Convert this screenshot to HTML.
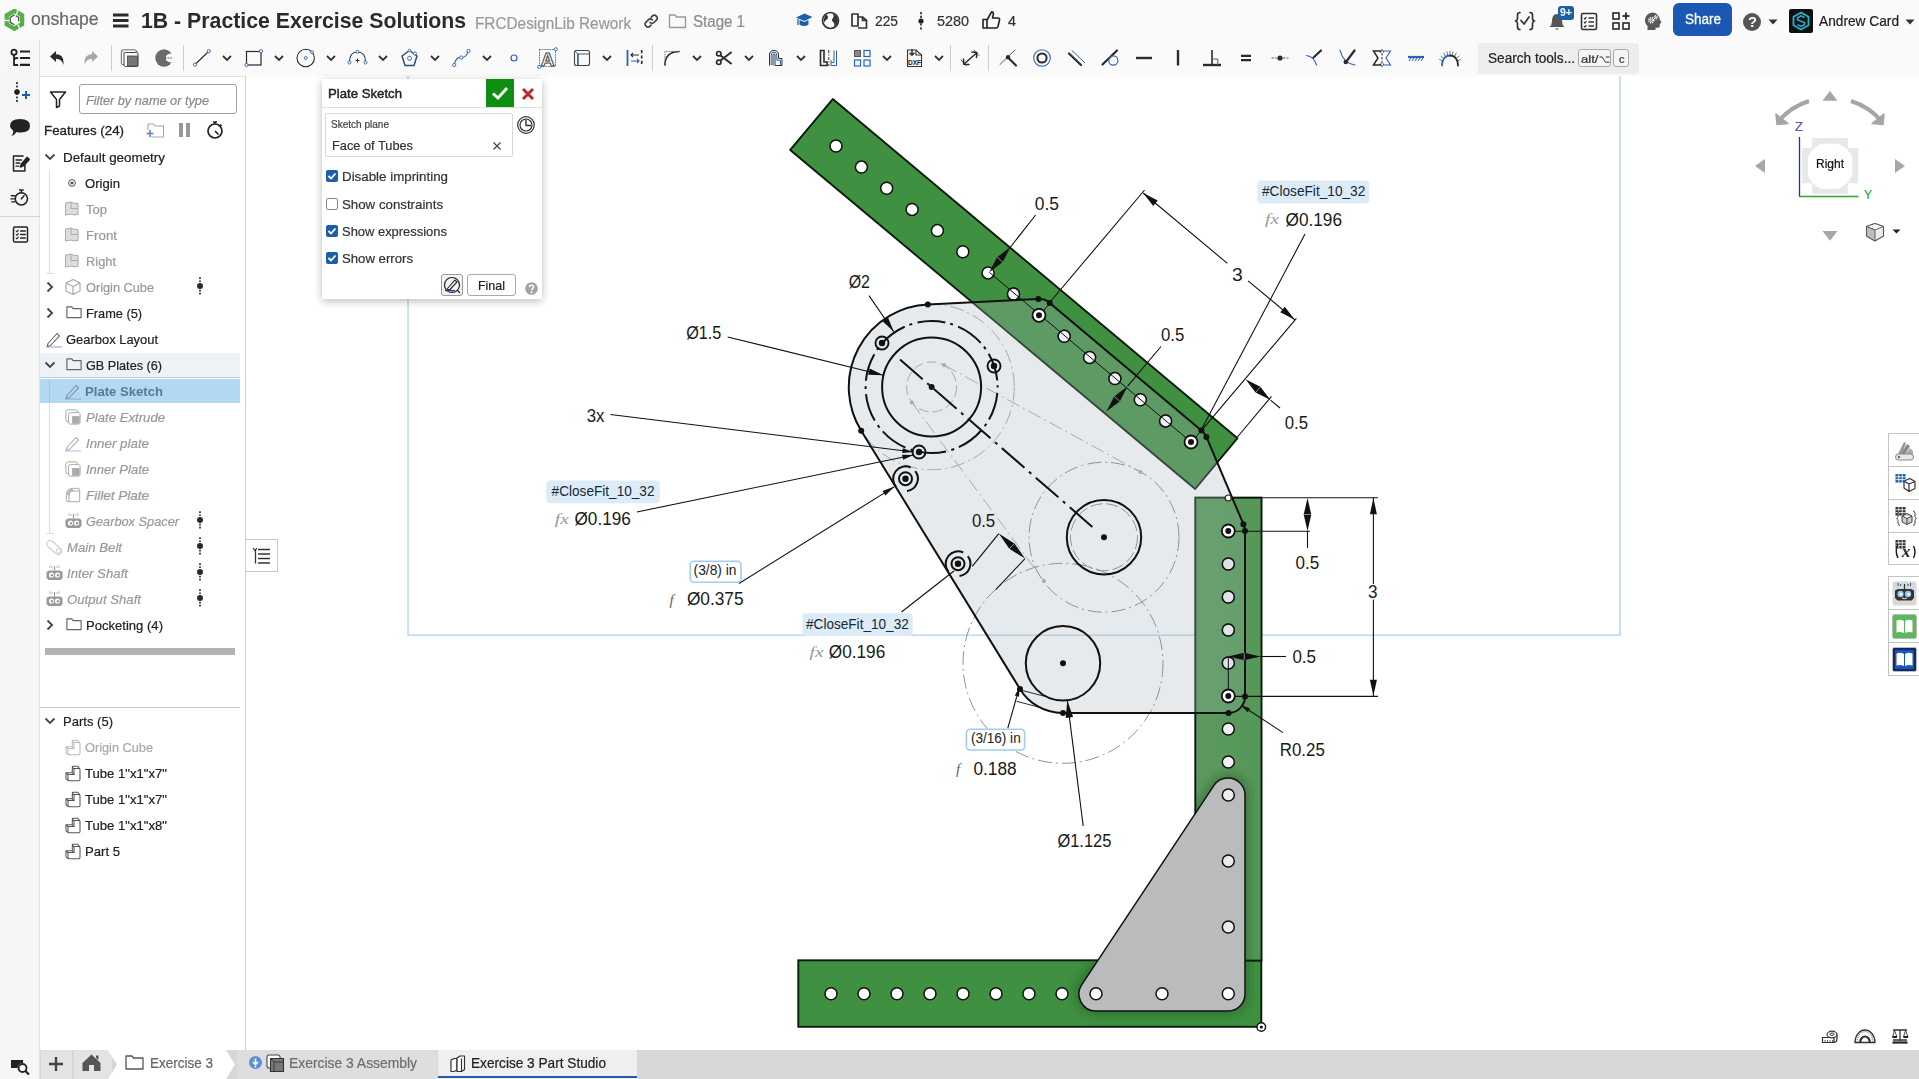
<!DOCTYPE html>
<html><head><meta charset="utf-8"><title>Onshape</title>
<style>
html,body{margin:0;padding:0}
body{width:1919px;height:1079px;overflow:hidden;background:#fff;font-family:"Liberation Sans",sans-serif;position:relative}
.a{position:absolute;display:block}
.t{position:absolute;white-space:nowrap;transform-origin:0 50%}
</style></head>
<body>
<svg class="a" style="left:0;top:0" width="1919" height="1079" viewBox="0 0 1919 1079" font-family="Liberation Sans, sans-serif">
<defs>
<filter id="sh" x="-20%" y="-20%" width="140%" height="140%"><feGaussianBlur stdDeviation="4"/></filter>
<linearGradient id="vg" x1="0" y1="0" x2="1" y2="0"><stop offset="0" stop-color="#5c995f"/><stop offset="1" stop-color="#559857"/></linearGradient>
</defs>
<path d="M408 60 H1620 V635 H408 Z" fill="none" stroke="#a9d1ef" stroke-width="1.25"/>
<path d="M832.8 99.1 L790.2 149.9 L1195.2 489 L1237.5 438.2 Z" fill="#3f9041" stroke="#0a1a0a" stroke-width="1.9" stroke-linejoin="round"/>
<rect x="798.3" y="960.3" width="463" height="66.5" fill="#3f9041" stroke="#0a1a0a" stroke-width="1.9"/>
<rect x="1195.3" y="497.6" width="66.2" height="463" fill="url(#vg)" stroke="#0a1a0a" stroke-width="1.9"/>
<circle cx="836.0" cy="146.0" r="6" fill="#fff" stroke="#111" stroke-width="1.5"/>
<circle cx="861.4" cy="167.1" r="6" fill="#fff" stroke="#111" stroke-width="1.5"/>
<circle cx="886.7" cy="188.3" r="6" fill="#fff" stroke="#111" stroke-width="1.5"/>
<circle cx="912.1" cy="209.4" r="6" fill="#fff" stroke="#111" stroke-width="1.5"/>
<circle cx="937.4" cy="230.6" r="6" fill="#fff" stroke="#111" stroke-width="1.5"/>
<circle cx="962.8" cy="251.7" r="6" fill="#fff" stroke="#111" stroke-width="1.5"/>
<circle cx="988.1" cy="272.9" r="6" fill="#fff" stroke="#111" stroke-width="1.5"/>
<circle cx="1013.5" cy="294.0" r="6" fill="#fff" stroke="#111" stroke-width="1.5"/>
<circle cx="1038.9" cy="315.1" r="6" fill="#fff" stroke="#111" stroke-width="1.5"/>
<circle cx="1064.2" cy="336.3" r="6" fill="#fff" stroke="#111" stroke-width="1.5"/>
<circle cx="1089.6" cy="357.4" r="6" fill="#fff" stroke="#111" stroke-width="1.5"/>
<circle cx="1114.9" cy="378.6" r="6" fill="#fff" stroke="#111" stroke-width="1.5"/>
<circle cx="1140.3" cy="399.7" r="6" fill="#fff" stroke="#111" stroke-width="1.5"/>
<circle cx="1165.6" cy="420.9" r="6" fill="#fff" stroke="#111" stroke-width="1.5"/>
<circle cx="1191.0" cy="442.0" r="6" fill="#fff" stroke="#111" stroke-width="1.5"/>
<circle cx="831.0" cy="993.7" r="6" fill="#fff" stroke="#111" stroke-width="1.5"/>
<circle cx="864.0" cy="993.7" r="6" fill="#fff" stroke="#111" stroke-width="1.5"/>
<circle cx="897.0" cy="993.7" r="6" fill="#fff" stroke="#111" stroke-width="1.5"/>
<circle cx="930.0" cy="993.7" r="6" fill="#fff" stroke="#111" stroke-width="1.5"/>
<circle cx="963.0" cy="993.7" r="6" fill="#fff" stroke="#111" stroke-width="1.5"/>
<circle cx="996.0" cy="993.7" r="6" fill="#fff" stroke="#111" stroke-width="1.5"/>
<circle cx="1029.0" cy="993.7" r="6" fill="#fff" stroke="#111" stroke-width="1.5"/>
<circle cx="1062.0" cy="993.7" r="6" fill="#fff" stroke="#111" stroke-width="1.5"/>
<circle cx="1228.3" cy="531.0" r="6" fill="#f0f2f2" stroke="#111" stroke-width="1.5"/>
<circle cx="1228.3" cy="564.0" r="6" fill="#f0f2f2" stroke="#111" stroke-width="1.5"/>
<circle cx="1228.3" cy="597.0" r="6" fill="#f0f2f2" stroke="#111" stroke-width="1.5"/>
<circle cx="1228.3" cy="630.0" r="6" fill="#f0f2f2" stroke="#111" stroke-width="1.5"/>
<circle cx="1228.3" cy="663.0" r="6" fill="#f0f2f2" stroke="#111" stroke-width="1.5"/>
<circle cx="1228.3" cy="696.0" r="6" fill="#f0f2f2" stroke="#111" stroke-width="1.5"/>
<circle cx="1228.3" cy="729.0" r="6" fill="#f0f2f2" stroke="#111" stroke-width="1.5"/>
<circle cx="1228.3" cy="762.0" r="6" fill="#f0f2f2" stroke="#111" stroke-width="1.5"/>
<clipPath id="tubeclip"><rect x="1196" y="498.5" width="64.7" height="461.8"/><rect x="799" y="961" width="461.7" height="65"/></clipPath>
<g clip-path="url(#tubeclip)"><path d="M1228 778 A17 17 0 0 1 1245 795 V994 A17 17 0 0 1 1228 1011 H1096 A17 17 0 0 1 1081.8 984.6 L1213.8 785.6 A17 17 0 0 1 1228 778 Z" fill="none" stroke="#1f4f22" stroke-opacity="0.45" stroke-width="9" filter="url(#sh)"/></g>
<path d="M1228 778 A17 17 0 0 1 1245 795 V994 A17 17 0 0 1 1228 1011 H1096 A17 17 0 0 1 1081.8 984.6 L1213.8 785.6 A17 17 0 0 1 1228 778 Z" fill="#babbbd" stroke="#111" stroke-width="1.5"/>
<circle cx="1228.3" cy="795.0" r="6" fill="#eceef0" stroke="#111" stroke-width="1.5"/>
<circle cx="1228.3" cy="861.0" r="6" fill="#e8eaec" stroke="#111" stroke-width="1.5"/>
<circle cx="1228.3" cy="927.0" r="6" fill="#e8eaec" stroke="#111" stroke-width="1.5"/>
<circle cx="1228.3" cy="993.7" r="6" fill="#fff" stroke="#111" stroke-width="1.5"/>
<circle cx="1162.0" cy="993.7" r="6" fill="#fff" stroke="#111" stroke-width="1.5"/>
<circle cx="1096.0" cy="993.7" r="6" fill="#fff" stroke="#111" stroke-width="1.5"/>
<path d="M927.8 304.5 L1038.4 299 Q1046 298.8 1049.7 303 L1201.4 430.4 Q1205 433.4 1206.4 436.9 L1243.4 524.2 Q1245 528 1245 531 V696.5 A16.5 16.5 0 0 1 1228.5 713 H1063 A49.5 49.5 0 0 1 1020 689 L861.2 430.7 A82.7 82.7 0 0 1 927.8 304.5 Z" fill="#a9b4be" fill-opacity="0.285"/>
<path d="M1196.2 498.6 H1232 L1243.4 524.2 L1245 531 V696.5 A16.5 16.5 0 0 1 1228.5 713 H1196.2 Z" fill="#3f9646" fill-opacity="0.16"/>
<circle cx="1228.3" cy="564.0" r="6" fill="#dfe3e5" stroke="#111" stroke-width="1.5"/>
<circle cx="1228.3" cy="597.0" r="6" fill="#dfe3e5" stroke="#111" stroke-width="1.5"/>
<circle cx="1228.3" cy="630.0" r="6" fill="#dfe3e5" stroke="#111" stroke-width="1.5"/>
<circle cx="1228.3" cy="663.0" r="6" fill="#dfe3e5" stroke="#111" stroke-width="1.5"/>
<circle cx="1013.5" cy="294.0" r="6" fill="#f0f2f4" stroke="#111" stroke-width="1.5"/>
<circle cx="1038.9" cy="315.1" r="6" fill="#f0f2f4" stroke="#111" stroke-width="1.5"/>
<circle cx="1064.2" cy="336.3" r="6" fill="#f0f2f4" stroke="#111" stroke-width="1.5"/>
<circle cx="1089.6" cy="357.4" r="6" fill="#f0f2f4" stroke="#111" stroke-width="1.5"/>
<circle cx="1114.9" cy="378.6" r="6" fill="#f0f2f4" stroke="#111" stroke-width="1.5"/>
<circle cx="1140.3" cy="399.7" r="6" fill="#f0f2f4" stroke="#111" stroke-width="1.5"/>
<circle cx="1165.6" cy="420.9" r="6" fill="#f0f2f4" stroke="#111" stroke-width="1.5"/>
<g fill="none" stroke="#929292" stroke-width="1">
<circle cx="931.6" cy="387" r="82.7" stroke-dasharray="14 4 2 4" stroke="#a9a9a9"/>
<circle cx="931.6" cy="387" r="25" stroke-dasharray="10 4" stroke="#a9a9a9"/>
<circle cx="1104" cy="537.2" r="75" stroke-dasharray="14 4 2 4"/>
<circle cx="1104" cy="537.2" r="33.5" stroke-dasharray="12 4"/>
<circle cx="1063" cy="663.3" r="100" stroke-dasharray="14 4 2 4"/>
<path d="M944 365 L1140.5 472" stroke-dasharray="14 4 2 4" stroke="#a9a9a9"/>
<path d="M911.8 402.4 L1044 581" stroke-dasharray="14 4 2 4" stroke="#a9a9a9"/>
<path d="M958 564 L1001 535" stroke="none"/>
</g>
<circle cx="944" cy="365" r="2" fill="#aaa"/>
<circle cx="911.8" cy="402.4" r="2" fill="#aaa"/>
<circle cx="1140.5" cy="472" r="2" fill="#aaa"/>
<circle cx="1044" cy="581" r="2" fill="#aaa"/>
<path d="M927.8 304.5 L1038.4 299 Q1046 298.8 1049.7 303 L1201.4 430.4 Q1205 433.4 1206.4 436.9 L1243.4 524.2 Q1245 528 1245 531 V696.5 A16.5 16.5 0 0 1 1228.5 713 H1063 A49.5 49.5 0 0 1 1020 689 L861.2 430.7 A82.7 82.7 0 0 1 927.8 304.5 Z" fill="none" stroke="#111" stroke-width="2"/>
<path d="M989.3 272.3 L1191.0 442.0" stroke="#111" stroke-width="1" fill="none" />
<g fill="none" stroke="#111" stroke-width="2">
<circle cx="931.6" cy="387" r="49.5"/>
<circle cx="931.6" cy="387" r="66" stroke-dasharray="28 5 3 5.47" stroke-dashoffset="-6"/>
<circle cx="1104" cy="537.2" r="37.2"/>
<circle cx="1063" cy="663.3" r="37.2"/>
<path d="M900 359.5 L1096.5 530.5" stroke-dasharray="30 6 3 6"/>
</g>
<circle cx="931.6" cy="387.0" r="3" fill="#111"/>
<circle cx="1104.0" cy="537.2" r="3" fill="#111"/>
<circle cx="1063.0" cy="663.3" r="3" fill="#111"/>
<circle cx="927.8" cy="304.5" r="3" fill="#111"/>
<circle cx="1038.4" cy="299.0" r="3" fill="#111"/>
<circle cx="1049.7" cy="303.0" r="3" fill="#111"/>
<circle cx="1201.4" cy="430.4" r="3" fill="#111"/>
<circle cx="1206.4" cy="436.9" r="3" fill="#111"/>
<circle cx="1243.4" cy="524.2" r="3" fill="#111"/>
<circle cx="1245.0" cy="531.0" r="3" fill="#111"/>
<circle cx="1245.0" cy="696.5" r="3" fill="#111"/>
<circle cx="1228.5" cy="713.0" r="3" fill="#111"/>
<circle cx="1063.0" cy="713.0" r="3" fill="#111"/>
<circle cx="1020.0" cy="689.0" r="3" fill="#111"/>
<circle cx="861.2" cy="430.7" r="3" fill="#111"/>
<circle cx="1228.2" cy="498" r="3" fill="#fff" stroke="#222" stroke-width="1.2"/>
<circle cx="1261.3" cy="1027" r="4.3" fill="#fff" stroke="#111" stroke-width="1.4"/><circle cx="1261.3" cy="1027" r="1.6" fill="#111"/>
<circle cx="1039" cy="315.3" r="6.5" fill="#fff" stroke="#111" stroke-width="1.8"/><circle cx="1039.0" cy="315.3" r="3" fill="#111"/>
<circle cx="1191" cy="442" r="6.5" fill="#fff" stroke="#111" stroke-width="1.8"/><circle cx="1191.0" cy="442.0" r="3" fill="#111"/>
<circle cx="1228.3" cy="531" r="6.5" fill="#fff" stroke="#111" stroke-width="1.8"/><circle cx="1228.3" cy="531.0" r="3" fill="#111"/>
<circle cx="1228.3" cy="696" r="6.5" fill="#fff" stroke="#111" stroke-width="1.8"/><circle cx="1228.3" cy="696.0" r="3" fill="#111"/>
<path d="M1050.0 303.0 L1043.8 310.5" stroke="#111" stroke-width="1" fill="none" />
<path d="M1201.4 430.4 L1195.5 437.5" stroke="#111" stroke-width="1" fill="none" />
<circle cx="882" cy="343" r="6.5" fill="none" stroke="#111" stroke-width="1.9"/><circle cx="882.0" cy="343.0" r="3.2" fill="#111"/>
<circle cx="994" cy="366" r="6.5" fill="none" stroke="#111" stroke-width="1.9"/><circle cx="994.0" cy="366.0" r="3.2" fill="#111"/>
<circle cx="919" cy="452" r="6.5" fill="none" stroke="#111" stroke-width="1.9"/><circle cx="919.0" cy="452.0" r="3.2" fill="#111"/>
<circle cx="905.5" cy="478.7" r="6.5" fill="none" stroke="#111" stroke-width="2"/><circle cx="905.5" cy="478.7" r="3.2" fill="#111"/>
<path d="M915.3 471.1 A12.4 12.4 0 0 1 907.0 491.0" fill="none" stroke="#111" stroke-width="2"/>
<path d="M896.0 486.7 A12.4 12.4 0 0 1 910.7 467.5" fill="none" stroke="#111" stroke-width="2"/>
<circle cx="958" cy="563.7" r="6.5" fill="none" stroke="#111" stroke-width="2"/><circle cx="958.0" cy="563.7" r="3.2" fill="#111"/>
<path d="M967.8 556.1 A12.4 12.4 0 0 1 959.5 576.0" fill="none" stroke="#111" stroke-width="2"/>
<path d="M948.5 571.7 A12.4 12.4 0 0 1 963.2 552.5" fill="none" stroke="#111" stroke-width="2"/>
<path d="M989.3 272.3 L1002.8 262.1 L1010.5 247.0 L997.0 257.2 Z" fill="#111"/><path d="M1002.8 262.1 L997.0 257.2" stroke="#ddd" stroke-width="0.6"/>
<path d="M1010.5 247.0 L1035.6 215.0" stroke="#111" stroke-width="1.1" fill="none" />
<text x="1034.8" y="209.6" font-size="17.5" fill="#1a1a1a" text-anchor="start" textLength="24.2" lengthAdjust="spacingAndGlyphs" >0.5</text>
<path d="M1049.7 302.5 L1144.6 190.0" stroke="#111" stroke-width="1.1" fill="none" />
<path d="M1201.6 430.3 L1296.4 318.4" stroke="#111" stroke-width="1.1" fill="none" />
<path d="M1143.2 193.0 L1227.3 263.3" stroke="#111" stroke-width="1.1" fill="none" />
<path d="M1248.1 280.8 L1294.8 319.8" stroke="#111" stroke-width="1.1" fill="none" />
<path d="M1143.2 193.0 L1157.7 200.6 L1153.2 206.0 Z" fill="#111"/>
<path d="M1294.8 319.8 L1280.3 312.2 L1284.8 306.8 Z" fill="#111"/>
<text x="1232" y="280.5" font-size="17.5" fill="#1a1a1a" text-anchor="start" textLength="10.7" lengthAdjust="spacingAndGlyphs" >3</text>
<path d="M1106.4 411.5 L1119.9 401.3 L1127.6 386.2 L1114.1 396.4 Z" fill="#111"/><path d="M1119.9 401.3 L1114.1 396.4" stroke="#ddd" stroke-width="0.6"/>
<path d="M1127.6 386.2 L1161.0 346.5" stroke="#111" stroke-width="1.1" fill="none" />
<text x="1161" y="340.8" font-size="17.5" fill="#1a1a1a" text-anchor="start" textLength="23.3" lengthAdjust="spacingAndGlyphs" >0.5</text>
<path d="M1237.0 437.5 L1271.5 396.4" stroke="#111" stroke-width="1.1" fill="none" />
<path d="M1245.5 379.2 L1255.6 392.6 L1270.5 400.1 L1260.4 386.7 Z" fill="#111"/><path d="M1255.6 392.6 L1260.4 386.7" stroke="#ddd" stroke-width="0.6"/>
<path d="M1270.5 400.1 L1280.0 408.0" stroke="#111" stroke-width="1.1" fill="none" />
<text x="1284.7" y="429" font-size="17.5" fill="#1a1a1a" text-anchor="start" textLength="23.3" lengthAdjust="spacingAndGlyphs" >0.5</text>
<rect x="1257.5" y="180.5" width="111.70000000000005" height="23.0" rx="4" fill="#dcebf6"/><text x="1262" y="196.3" font-size="14" fill="#14283a" text-anchor="start" textLength="103.3" lengthAdjust="spacingAndGlyphs" >#CloseFit_10_32</text>
<text x="1265" y="224" font-size="14" font-family="Liberation Serif" font-style="italic" fill="#999" textLength="14" lengthAdjust="spacingAndGlyphs">fx</text>
<text x="1285.5" y="226" font-size="17.5" fill="#1a1a1a" text-anchor="start" textLength="56.5" lengthAdjust="spacingAndGlyphs" >Ø0.196</text>
<path d="M1305.0 234.0 L1200.0 432.3" stroke="#111" stroke-width="1.1" fill="none" />
<path d="M1232.0 497.8 L1378.0 497.8" stroke="#111" stroke-width="1.1" fill="none" />
<path d="M1235.0 531.3 L1310.0 531.3" stroke="#111" stroke-width="1.1" fill="none" />
<path d="M1235.0 696.4 L1378.0 696.4" stroke="#111" stroke-width="1.1" fill="none" />
<path d="M1307.5 498.0 L1303.7 514.5 L1307.5 531.0 L1311.3 514.5 Z" fill="#111"/><path d="M1303.7 514.5 L1311.3 514.5" stroke="#ddd" stroke-width="0.6"/>
<path d="M1307.5 531.0 L1307.5 548.0" stroke="#111" stroke-width="1.1" fill="none" />
<text x="1295.5" y="569" font-size="17.5" fill="#1a1a1a" text-anchor="start" textLength="23.7" lengthAdjust="spacingAndGlyphs" >0.5</text>
<path d="M1373.4 498.0 L1373.4 584.0" stroke="#111" stroke-width="1.1" fill="none" />
<path d="M1373.4 599.5 L1373.4 696.0" stroke="#111" stroke-width="1.1" fill="none" />
<path d="M1373.4 498.2 L1376.9 514.2 L1369.9 514.2 Z" fill="#111"/>
<path d="M1373.4 695.8 L1369.9 679.8 L1376.9 679.8 Z" fill="#111"/>
<text x="1368" y="598" font-size="17.5" fill="#1a1a1a" text-anchor="start" textLength="9.5" lengthAdjust="spacingAndGlyphs" >3</text>
<path d="M1228.0 656.5 L1244.2 660.3 L1260.5 656.5 L1244.2 652.7 Z" fill="#111"/><path d="M1244.2 660.3 L1244.2 652.7" stroke="#ddd" stroke-width="0.6"/>
<path d="M1260.0 656.5 L1286.0 656.5" stroke="#111" stroke-width="1.1" fill="none" />
<path d="M1228.3 657.0 L1228.3 690.0" stroke="#111" stroke-width="1" fill="none" />
<text x="1292.4" y="663.3" font-size="17.5" fill="#1a1a1a" text-anchor="start" textLength="23.6" lengthAdjust="spacingAndGlyphs" >0.5</text>
<path d="M1283.0 732.6 L1243.5 706.8" stroke="#111" stroke-width="1.1" fill="none" />
<path d="M1240.5 704.8 L1250.1 708.4 L1247.6 712.2 Z" fill="#111"/>
<text x="1279.8" y="756.2" font-size="17.5" fill="#1a1a1a" text-anchor="start" textLength="45.0" lengthAdjust="spacingAndGlyphs" >R0.25</text>
<path d="M1083.2 826.0 L1067.3 700.6" stroke="#111" stroke-width="1.1" fill="none" /><path d="M1067.3 700.6 L1073.1 717.0 L1065.7 717.9 Z" fill="#111"/>
<text x="1057.4" y="846.8" font-size="17.5" fill="#1a1a1a" text-anchor="start" textLength="54.0" lengthAdjust="spacingAndGlyphs" >Ø1.125</text>
<path d="M1007.8 728.1 L1018.3 691.1" stroke="#111" stroke-width="1.1" fill="none" />
<path d="M1019.4 687.4 L1019.1 696.7 L1014.8 695.4 Z" fill="#111"/>
<path d="M1021.0 690.2 L1046.0 696.6" stroke="#111" stroke-width="0.9" fill="none" />
<path d="M1016.6 701.3 L1039.0 707.2" stroke="#111" stroke-width="0.9" fill="none" />
<rect x="966.4" y="729.2" width="58.19999999999993" height="20.799999999999955" rx="3.5" fill="#fff" stroke="#9fcdf0" stroke-width="1.6"/><text x="970.9" y="743" font-size="14" fill="#222" text-anchor="start" textLength="49.8" lengthAdjust="spacingAndGlyphs" >(3/16) in</text>
<text x="956" y="774" font-size="15" font-family="Liberation Serif" font-style="italic" fill="#666">f</text>
<text x="973.4" y="774.5" font-size="17.5" fill="#1a1a1a" text-anchor="start" textLength="43.2" lengthAdjust="spacingAndGlyphs" >0.188</text>
<path d="M972.2 566.3 L998.8 533.6" stroke="#111" stroke-width="1.1" fill="none" />
<path d="M1025.0 558.6 L995.8 589.7" stroke="#111" stroke-width="1.1" fill="none" />
<path d="M998.8 533.6 L1009.3 548.8 L1025.0 558.6 L1014.5 543.4 Z" fill="#111"/><path d="M1009.3 548.8 L1014.5 543.4" stroke="#ddd" stroke-width="0.6"/>
<text x="971.9" y="526.8" font-size="17.5" fill="#1a1a1a" text-anchor="start" textLength="23.3" lengthAdjust="spacingAndGlyphs" >0.5</text>
<path d="M869.0 295.6 L893.8 331.8" stroke="#111" stroke-width="1.1" fill="none" /><path d="M893.8 331.8 L882.6 321.3 L888.0 317.6 Z" fill="#111"/>
<text x="848.7" y="288" font-size="17.5" fill="#1a1a1a" text-anchor="start" textLength="21.3" lengthAdjust="spacingAndGlyphs" >Ø2</text>
<path d="M727.7 337.0 L883.5 375.2" stroke="#111" stroke-width="1.1" fill="none" /><path d="M883.5 375.2 L868.1 374.8 L869.7 368.4 Z" fill="#111"/>
<text x="686.2" y="338.7" font-size="17.5" fill="#1a1a1a" text-anchor="start" textLength="35.2" lengthAdjust="spacingAndGlyphs" >Ø1.5</text>
<path d="M610.4 414.5 L913.4 452.0" stroke="#111" stroke-width="1.1" fill="none" /><path d="M913.4 452.0 L902.2 453.1 L902.8 448.2 Z" fill="#111"/>
<text x="586.8" y="421.5" font-size="17.5" fill="#1a1a1a" text-anchor="start" textLength="17.7" lengthAdjust="spacingAndGlyphs" >3x</text>
<rect x="546.3" y="480.4" width="113.5" height="22.80000000000001" rx="4" fill="#dcebf6"/><text x="551.6" y="496.0" font-size="14" fill="#14283a" text-anchor="start" textLength="102.9" lengthAdjust="spacingAndGlyphs" >#CloseFit_10_32</text>
<text x="554.8" y="524" font-size="14" font-family="Liberation Serif" font-style="italic" fill="#999" textLength="14" lengthAdjust="spacingAndGlyphs">fx</text>
<text x="574.5" y="525.4" font-size="17.5" fill="#1a1a1a" text-anchor="start" textLength="56.4" lengthAdjust="spacingAndGlyphs" >Ø0.196</text>
<path d="M636.9 512.0 L913.4 455.0" stroke="#111" stroke-width="1.1" fill="none" /><path d="M913.4 455.0 L903.1 459.7 L902.1 454.8 Z" fill="#111"/>
<path d="M739.0 583.5 L894.6 486.6" stroke="#111" stroke-width="1.1" fill="none" /><path d="M894.6 486.6 L885.4 495.5 L882.5 490.9 Z" fill="#111"/>
<rect x="690.2" y="561.2" width="50.799999999999955" height="21.0" rx="3.5" fill="#fff" stroke="#9fcdf0" stroke-width="1.6"/><text x="693.6" y="575.2" font-size="14" fill="#222" text-anchor="start" textLength="42.9" lengthAdjust="spacingAndGlyphs" >(3/8) in</text>
<text x="669.6" y="604.5" font-size="15" font-family="Liberation Serif" font-style="italic" fill="#666">f</text>
<text x="686.9" y="605" font-size="17.5" fill="#1a1a1a" text-anchor="start" textLength="56.7" lengthAdjust="spacingAndGlyphs" >Ø0.375</text>
<path d="M901.5 612.0 L953.9 571.0" stroke="#111" stroke-width="1.1" fill="none" />
<rect x="802.4" y="613.2" width="110.30000000000007" height="22.799999999999955" rx="4" fill="#dcebf6"/><text x="806" y="628.8" font-size="14" fill="#14283a" text-anchor="start" textLength="102.8" lengthAdjust="spacingAndGlyphs" >#CloseFit_10_32</text>
<text x="809.5" y="657" font-size="14" font-family="Liberation Serif" font-style="italic" fill="#999" textLength="14" lengthAdjust="spacingAndGlyphs">fx</text>
<text x="828.8" y="658.2" font-size="17.5" fill="#1a1a1a" text-anchor="start" textLength="56.4" lengthAdjust="spacingAndGlyphs" >Ø0.196</text>
</svg>
<div class="a" style="left:0;top:40px;width:40px;height:1039px;background:#f6f6f6;border-right:1px solid #e2e2e2;box-sizing:border-box"></div>
<svg class="a" style="left:8.0px;top:81.0px" width="24" height="24" viewBox="0 0 24 24" ><circle cx="9" cy="11" r="2.8" fill="#222"/><path d="M9 1 V22" stroke="#222" stroke-width="1.6" stroke-dasharray="2 1.6"/><path d="M14 14 H22 M18 10 V18" stroke="#1b5faa" stroke-width="2"/></svg>
<svg class="a" style="left:8.0px;top:115.0px" width="24" height="24" viewBox="0 0 24 24" ><path d="M12 4 Q22 4 22 11 Q22 17 13 17.5 Q10 17.5 8.5 17 Q7 20 3 21 Q6 18.5 5 15.5 Q2 13.5 2 11 Q2 4 12 4 Z" fill="#222"/></svg>
<svg class="a" style="left:10.0px;top:153.0px" width="21" height="21" viewBox="0 0 24 24" ><g fill="none" stroke="#222" stroke-width="1.7" stroke-linecap="round" stroke-linejoin="round"><path d="M15 3.5 H4 V20.5 H17 V13"/><path d="M7 8 H13 M7 11.5 H11 M7 15 H10"/><path d="M12 16 L13 12.5 L19.5 5 L22 7.5 L15.5 14.5 Z" fill="#222"/></g></svg>
<svg class="a" style="left:9.5px;top:186.5px" width="21" height="21" viewBox="0 0 24 24" ><g fill="none" stroke="#222" stroke-width="1.8" stroke-linecap="round" stroke-linejoin="round"><circle cx="13" cy="13.5" r="7"/><path d="M11 3.5 H15 M13 4 V6.5 M13 13.5 L16 10"/><path d="M1.5 10 H6 M1 13.5 H5 M2 17 H6" stroke-width="1.5"/></g></svg>
<div class="a" style="left:0;top:216px;width:40px;height:1px;background:#d4d4d4"></div>
<svg class="a" style="left:9.5px;top:223.5px" width="21" height="21" viewBox="0 0 24 24" ><g fill="none" stroke="#222" stroke-width="1.7" stroke-linecap="round" stroke-linejoin="round"><rect x="4" y="3.5" width="16" height="17" rx="1.5"/><path d="M7 8 L8 9 L9.5 7 M7 12 L8 13 L9.5 11 M7 16 L8 17 L9.5 15" stroke-width="1.2"/><path d="M12 8 H17.5 M12 12 H17.5 M12 16 H17.5" stroke-width="1.5"/></g></svg>
<svg class="a" style="left:8.0px;top:1054.0px" width="24" height="24" viewBox="0 0 24 24" ><path d="M3 6 H15 V9 Q10 9 9.5 14 H3 Z" fill="#222"/><circle cx="14.5" cy="14" r="4" fill="none" stroke="#222" stroke-width="1.8"/><path d="M17.5 17 L21 20.5" stroke="#222" stroke-width="2.2"/></svg>
<div class="a" style="left:40px;top:76px;width:205px;height:974px;background:#fff;border-right:1px solid #d0d0d0;border-top:1px solid #e0e0e0;box-sizing:content-box"></div>
<svg class="a" style="left:46.0px;top:87.0px" width="24" height="24" viewBox="0 0 24 24" ><g fill="none" stroke="#222" stroke-width="1.5" stroke-linecap="round" stroke-linejoin="round"><path d="M4.5 5 H19.5 L13.5 12.5 V19 L10.5 20.5 V12.5 Z"/></g></svg>
<div class="a" style="left:79px;top:84px;width:158px;height:30px;border:1px solid #a0a0a0;border-radius:3px;box-sizing:border-box;background:#fff"></div>
<div class="t" style="left:86px;top:92.8px;font-size:13px;line-height:15.6px;color:#8a8a8a;font-style:italic;-webkit-text-stroke:0.22px #8a8a8a;transform:scaleX(0.978);">Filter by name or type</div>
<div class="t" style="left:44px;top:122.5px;font-size:13.5px;line-height:16.2px;color:#222;transform:scaleX(0.987);-webkit-text-stroke:0.3px #222;">Features (24)</div>
<svg class="a" style="left:145px;top:122px" width="20" height="17" viewBox="0 0 20 17" ><path d="M6 15 H18.5 V4 H10 L8.5 2 H3 V8" fill="none" stroke="#9ab" stroke-width="1.1"/><path d="M5 8 V15 M1.5 11.5 H8.5" stroke="#5b7fd0" stroke-width="1.6"/></svg>
<div class="a" style="left:179px;top:123px;width:4px;height:14px;background:#999"></div><div class="a" style="left:186px;top:123px;width:4px;height:14px;background:#999"></div>
<svg class="a" style="left:205px;top:120px" width="20" height="20" viewBox="0 0 20 20" ><circle cx="10" cy="11" r="7" fill="none" stroke="#222" stroke-width="1.7"/><path d="M8 2 H12 M10 2 V4 M10 11 L13.5 14.5 M15 4.5 L16.5 6" stroke="#222" stroke-width="1.7" fill="none"/></svg>
<div class="a" style="left:49px;top:170px;width:1px;height:103px;background:#ddd"></div><div class="a" style="left:46px;top:273px;width:8px;height:1px;background:#ddd"></div>
<div class="a" style="left:49px;top:404px;width:1px;height:129px;background:#ddd"></div><div class="a" style="left:46px;top:533px;width:8px;height:1px;background:#ddd"></div>
<svg class="a" style="left:44px;top:153px" width="12" height="8" viewBox="0 0 12 8" ><path d="M1.5 1.5 L6 6 L10.5 1.5" fill="none" stroke="#484848" stroke-width="1.9"/></svg>
<div class="t" style="left:63px;top:149.5px;font-size:13.5px;line-height:16.2px;color:#222;-webkit-text-stroke:0.22px #222;transform:scaleX(0.992);">Default geometry</div>
<svg class="a" style="left:67px;top:178px" width="10" height="10" viewBox="0 0 10 10" ><circle cx="5" cy="5" r="3.4" fill="none" stroke="#555" stroke-width="1"/><circle cx="5" cy="5" r="1.6" fill="#555"/></svg>
<div class="t" style="left:85px;top:175.5px;font-size:13.5px;line-height:16.2px;color:#222;-webkit-text-stroke:0.22px #222;transform:scaleX(0.972);">Origin</div>
<svg class="a" style="left:64px;top:201px" width="16" height="16" viewBox="0 0 16 16" ><path d="M1.5 2 L7 1 Q10 3 14 2.5 V13.5 Q9 14.5 7 13 L1.5 14 Z" fill="#ddd" stroke="#aaa" stroke-width="1"/><path d="M7 1.5 V7.5 H14" fill="none" stroke="#aaa" stroke-width="1"/></svg>
<div class="t" style="left:86px;top:201.5px;font-size:13.5px;line-height:16.2px;color:#999;-webkit-text-stroke:0.22px #999;transform:scaleX(0.965);">Top</div>
<svg class="a" style="left:64px;top:227px" width="16" height="16" viewBox="0 0 16 16" ><path d="M1.5 2 L7 1 Q10 3 14 2.5 V13.5 Q9 14.5 7 13 L1.5 14 Z" fill="#ddd" stroke="#aaa" stroke-width="1"/><path d="M7 1.5 V7.5 H14" fill="none" stroke="#aaa" stroke-width="1"/></svg>
<div class="t" style="left:86px;top:227.5px;font-size:13.5px;line-height:16.2px;color:#999;-webkit-text-stroke:0.22px #999;transform:scaleX(0.984);">Front</div>
<svg class="a" style="left:64px;top:253px" width="16" height="16" viewBox="0 0 16 16" ><path d="M1.5 2 L7 1 Q10 3 14 2.5 V13.5 Q9 14.5 7 13 L1.5 14 Z" fill="#ddd" stroke="#aaa" stroke-width="1"/><path d="M7 1.5 V7.5 H14" fill="none" stroke="#aaa" stroke-width="1"/></svg>
<div class="t" style="left:86px;top:253.5px;font-size:13.5px;line-height:16.2px;color:#999;-webkit-text-stroke:0.22px #999;transform:scaleX(0.952);">Right</div>
<svg class="a" style="left:46px;top:281px" width="8" height="12" viewBox="0 0 8 12" ><path d="M1.5 1.5 L6 6 L1.5 10.5" fill="none" stroke="#484848" stroke-width="1.9"/></svg>
<svg class="a" style="left:64px;top:278px" width="18" height="18" viewBox="0 0 18 18" ><path d="M9 1.5 L16 5 V13 L9 16.5 L2 13 V5 Z M2 5 L9 8.5 L16 5 M9 8.5 V16.5" fill="none" stroke="#aaa" stroke-width="1.2" stroke-linejoin="round"/></svg>
<div class="t" style="left:86px;top:279.5px;font-size:13.5px;line-height:16.2px;color:#999;-webkit-text-stroke:0.22px #999;transform:scaleX(0.944);">Origin Cube</div>
<svg class="a" style="left:196px;top:277px" width="8" height="18" viewBox="0 0 8 18" ><circle cx="4" cy="9" r="3" fill="#2a2a2a"/><path d="M4 0.3 V18" stroke="#2a2a2a" stroke-width="1.7" stroke-dasharray="1.7 1.4"/></svg>
<svg class="a" style="left:46px;top:307px" width="8" height="12" viewBox="0 0 8 12" ><path d="M1.5 1.5 L6 6 L1.5 10.5" fill="none" stroke="#484848" stroke-width="1.9"/></svg>
<svg class="a" style="left:65.5px;top:306.2px" width="16" height="12.5" viewBox="0 0 18 14" ><path d="M1 13 V1 H6.5 L8 3 H17 V13 Z" fill="none" stroke="#666" stroke-width="1.3" stroke-linejoin="round"/></svg>
<div class="t" style="left:86px;top:305.5px;font-size:13.5px;line-height:16.2px;color:#222;-webkit-text-stroke:0.22px #222;transform:scaleX(0.945);">Frame (5)</div>
<svg class="a" style="left:45px;top:331px" width="18" height="17" viewBox="0 0 18 17" ><path d="M3 12.5 L12 2.5 L14.5 4.8 L5.5 14.5 L2.2 15.5 Z" fill="none" stroke="#666" stroke-width="1.1" stroke-linejoin="round"/><path d="M1 16 H17" stroke="#8a8ad0" stroke-width="0.9"/></svg>
<div class="t" style="left:66px;top:331.5px;font-size:13.5px;line-height:16.2px;color:#222;-webkit-text-stroke:0.22px #222;transform:scaleX(0.958);">Gearbox Layout</div>
<div class="a" style="left:40px;top:353px;width:200px;height:24px;background:#eef1f5"></div><div class="a" style="left:40px;top:377px;width:200px;height:1px;background:#a9d4ee"></div>
<svg class="a" style="left:44px;top:361px" width="12" height="8" viewBox="0 0 12 8" ><path d="M1.5 1.5 L6 6 L10.5 1.5" fill="none" stroke="#484848" stroke-width="1.9"/></svg>
<svg class="a" style="left:65.5px;top:358.2px" width="16" height="12.5" viewBox="0 0 18 14" ><path d="M1 13 V1 H6.5 L8 3 H17 V13 Z" fill="none" stroke="#666" stroke-width="1.3" stroke-linejoin="round"/></svg>
<div class="t" style="left:86px;top:357.5px;font-size:13.5px;line-height:16.2px;color:#222;-webkit-text-stroke:0.22px #222;transform:scaleX(0.938);">GB Plates (6)</div>
<div class="a" style="left:40px;top:379px;width:200px;height:24px;background:#b1d9f2"></div>
<div class="a" style="left:49px;top:379px;width:1px;height:24px;background:#9cc5de"></div>
<svg class="a" style="left:64px;top:383px" width="18" height="17" viewBox="0 0 18 17" ><path d="M3 12.5 L12 2.5 L14.5 4.8 L5.5 14.5 L2.2 15.5 Z" fill="none" stroke="#7d8fa0" stroke-width="1.1" stroke-linejoin="round"/><path d="M1 16 H17" stroke="#8fa3c4" stroke-width="0.9"/></svg>
<div class="t" style="left:85px;top:383.5px;font-size:13.5px;line-height:16.2px;color:#587a92;font-weight:bold;transform:scaleX(0.972);">Plate Sketch</div>
<svg class="a" style="left:64.7px;top:409px" width="16" height="16" viewBox="0 0 18 18" ><rect x="1" y="1" width="13.5" height="13.5" rx="2.5" fill="none" stroke="#aaa" stroke-width="1.1"/><rect x="4" y="4" width="13" height="13" rx="2" fill="#fff" stroke="#aaa" stroke-width="1.1"/><rect x="8" y="8" width="8.5" height="8.5" fill="#aaa"/></svg>
<div class="t" style="left:86px;top:409.5px;font-size:13.5px;line-height:16.2px;color:#999;font-style:italic;-webkit-text-stroke:0.22px #999;transform:scaleX(0.975);">Plate Extrude</div>
<svg class="a" style="left:64px;top:435px" width="18" height="17" viewBox="0 0 18 17" ><path d="M3 12.5 L12 2.5 L14.5 4.8 L5.5 14.5 L2.2 15.5 Z" fill="none" stroke="#aaa" stroke-width="1.1" stroke-linejoin="round"/><path d="M1 16 H17" stroke="#b0b0e0" stroke-width="0.9"/></svg>
<div class="t" style="left:86px;top:435.5px;font-size:13.5px;line-height:16.2px;color:#999;font-style:italic;-webkit-text-stroke:0.22px #999;transform:scaleX(0.988);">Inner plate</div>
<svg class="a" style="left:64.7px;top:461px" width="16" height="16" viewBox="0 0 18 18" ><rect x="1" y="1" width="13.5" height="13.5" rx="2.5" fill="none" stroke="#aaa" stroke-width="1.1"/><rect x="4" y="4" width="13" height="13" rx="2" fill="#fff" stroke="#aaa" stroke-width="1.1"/><rect x="8" y="8" width="8.5" height="8.5" fill="#aaa"/></svg>
<div class="t" style="left:86px;top:461.5px;font-size:13.5px;line-height:16.2px;color:#999;font-style:italic;-webkit-text-stroke:0.22px #999;transform:scaleX(0.965);">Inner Plate</div>
<svg class="a" style="left:64.7px;top:487px" width="16" height="16" viewBox="0 0 18 18" ><path d="M3.5 16.5 Q1.5 16.5 1.5 14.5 V9 Q1.5 1.5 9 1.5 H14.5 Q16.5 1.5 16.5 3.5 V16.5 Z" fill="none" stroke="#aaa" stroke-width="1.1"/><path d="M1.8 8.5 Q2.3 2.3 8.5 1.8 L10 4.5 Q4.6 4.8 4.5 10 Z" fill="#bbb"/><path d="M4.5 16.5 V10 Q4.5 4.5 10 4.5 H16.5" fill="none" stroke="#aaa" stroke-width="1.1"/></svg>
<div class="t" style="left:86px;top:487.5px;font-size:13.5px;line-height:16.2px;color:#999;font-style:italic;-webkit-text-stroke:0.22px #999;">Fillet Plate</div>
<svg class="a" style="left:64px;top:512px" width="19" height="18" viewBox="0 0 19 18" ><path d="M1.5 8 L4 6.5 H15 L17.5 8 V14 L15.5 16 H3.5 L1.5 14 Z" fill="#999"/><circle cx="6.5" cy="11" r="2.6" fill="#fff"/><circle cx="12.5" cy="11" r="2.6" fill="#fff"/><circle cx="7" cy="11.3" r="1.2" fill="#999"/><circle cx="13" cy="11.3" r="1.2" fill="#999"/><path d="M9.5 6.5 V2" stroke="#999" stroke-width="1.2"/><path d="M5 1 V4 M7 2 V4 M12 2 V4 M14 1 V4" stroke="#bbb" stroke-width="1"/></svg>
<div class="t" style="left:86px;top:513.5px;font-size:13.5px;line-height:16.2px;color:#999;font-style:italic;-webkit-text-stroke:0.22px #999;transform:scaleX(0.946);">Gearbox Spacer</div>
<svg class="a" style="left:196px;top:511px" width="8" height="18" viewBox="0 0 8 18" ><circle cx="4" cy="9" r="3" fill="#2a2a2a"/><path d="M4 0.3 V18" stroke="#2a2a2a" stroke-width="1.7" stroke-dasharray="1.7 1.4"/></svg>
<svg class="a" style="left:45px;top:538px" width="18" height="18" viewBox="0 0 18 18" ><path d="M2 4.5 Q4 1 7.5 3.5 L16 11 Q18 14.5 15 16 Q12 17.5 9.5 14.5 L2.5 8 Q1 6 2 4.5 Z" fill="none" stroke="#ccc" stroke-width="1.1"/><circle cx="13.5" cy="13" r="2.3" fill="none" stroke="#ccc" stroke-width="1"/></svg>
<div class="t" style="left:67px;top:539.5px;font-size:13.5px;line-height:16.2px;color:#999;font-style:italic;-webkit-text-stroke:0.22px #999;transform:scaleX(0.977);">Main Belt</div>
<svg class="a" style="left:196px;top:537px" width="8" height="18" viewBox="0 0 8 18" ><circle cx="4" cy="9" r="3" fill="#2a2a2a"/><path d="M4 0.3 V18" stroke="#2a2a2a" stroke-width="1.7" stroke-dasharray="1.7 1.4"/></svg>
<svg class="a" style="left:45px;top:564px" width="19" height="18" viewBox="0 0 19 18" ><path d="M1.5 8 L4 6.5 H15 L17.5 8 V14 L15.5 16 H3.5 L1.5 14 Z" fill="#999"/><circle cx="6.5" cy="11" r="2.6" fill="#fff"/><circle cx="12.5" cy="11" r="2.6" fill="#fff"/><circle cx="7" cy="11.3" r="1.2" fill="#999"/><circle cx="13" cy="11.3" r="1.2" fill="#999"/><path d="M9.5 6.5 V2" stroke="#999" stroke-width="1.2"/><path d="M5 1 V4 M7 2 V4 M12 2 V4 M14 1 V4" stroke="#bbb" stroke-width="1"/></svg>
<div class="t" style="left:67px;top:565.5px;font-size:13.5px;line-height:16.2px;color:#999;font-style:italic;-webkit-text-stroke:0.22px #999;transform:scaleX(0.979);">Inter Shaft</div>
<svg class="a" style="left:196px;top:563px" width="8" height="18" viewBox="0 0 8 18" ><circle cx="4" cy="9" r="3" fill="#2a2a2a"/><path d="M4 0.3 V18" stroke="#2a2a2a" stroke-width="1.7" stroke-dasharray="1.7 1.4"/></svg>
<svg class="a" style="left:45px;top:590px" width="19" height="18" viewBox="0 0 19 18" ><path d="M1.5 8 L4 6.5 H15 L17.5 8 V14 L15.5 16 H3.5 L1.5 14 Z" fill="#999"/><circle cx="6.5" cy="11" r="2.6" fill="#fff"/><circle cx="12.5" cy="11" r="2.6" fill="#fff"/><circle cx="7" cy="11.3" r="1.2" fill="#999"/><circle cx="13" cy="11.3" r="1.2" fill="#999"/><path d="M9.5 6.5 V2" stroke="#999" stroke-width="1.2"/><path d="M5 1 V4 M7 2 V4 M12 2 V4 M14 1 V4" stroke="#bbb" stroke-width="1"/></svg>
<div class="t" style="left:67px;top:591.5px;font-size:13.5px;line-height:16.2px;color:#999;font-style:italic;-webkit-text-stroke:0.22px #999;transform:scaleX(0.976);">Output Shaft</div>
<svg class="a" style="left:196px;top:589px" width="8" height="18" viewBox="0 0 8 18" ><circle cx="4" cy="9" r="3" fill="#2a2a2a"/><path d="M4 0.3 V18" stroke="#2a2a2a" stroke-width="1.7" stroke-dasharray="1.7 1.4"/></svg>
<svg class="a" style="left:46px;top:619px" width="8" height="12" viewBox="0 0 8 12" ><path d="M1.5 1.5 L6 6 L1.5 10.5" fill="none" stroke="#484848" stroke-width="1.9"/></svg>
<svg class="a" style="left:65.5px;top:618.2px" width="16" height="12.5" viewBox="0 0 18 14" ><path d="M1 13 V1 H6.5 L8 3 H17 V13 Z" fill="none" stroke="#666" stroke-width="1.3" stroke-linejoin="round"/></svg>
<div class="t" style="left:86px;top:617.5px;font-size:13.5px;line-height:16.2px;color:#222;-webkit-text-stroke:0.22px #222;transform:scaleX(0.968);">Pocketing (4)</div>
<div class="a" style="left:45px;top:648px;width:190px;height:7px;background:#b3b3b3"></div>
<div class="a" style="left:40px;top:707px;width:200px;height:1px;background:#ccc"></div>
<svg class="a" style="left:44px;top:717px" width="12" height="8" viewBox="0 0 12 8" ><path d="M1.5 1.5 L6 6 L10.5 1.5" fill="none" stroke="#484848" stroke-width="1.9"/></svg>
<div class="t" style="left:63px;top:713.5px;font-size:13.5px;line-height:16.2px;color:#222;-webkit-text-stroke:0.22px #222;transform:scaleX(0.966);">Parts (5)</div>
<svg class="a" style="left:63.5px;top:738px" width="17" height="18" viewBox="0 0 17 18" ><g fill="none" stroke="#bbb" stroke-width="1.05" stroke-linejoin="round" stroke-linecap="round"><path d="M4 10.5 H10 V4.5 H15 Q16 4.5 16 5.5 V15.5 Q16 16.8 14.8 16.8 H5 Q4 16.8 4 15.8 Z"/><path d="M4 10.5 L2 8.8 V14.5 Q2 15.5 4 16.2 M2 8.8 H8.3 L10 10.5 M8.3 8.8 V3.2 Q8.3 2.2 9.3 2.2 H13.5 L15.6 4.6 M8.3 3.5 L10 4.5"/></g></svg>
<div class="t" style="left:85px;top:739.5px;font-size:13.5px;line-height:16.2px;color:#aaa;-webkit-text-stroke:0.22px #aaa;transform:scaleX(0.944);">Origin Cube</div>
<svg class="a" style="left:63.5px;top:764px" width="17" height="18" viewBox="0 0 17 18" ><g fill="none" stroke="#555" stroke-width="1.05" stroke-linejoin="round" stroke-linecap="round"><path d="M4 10.5 H10 V4.5 H15 Q16 4.5 16 5.5 V15.5 Q16 16.8 14.8 16.8 H5 Q4 16.8 4 15.8 Z"/><path d="M4 10.5 L2 8.8 V14.5 Q2 15.5 4 16.2 M2 8.8 H8.3 L10 10.5 M8.3 8.8 V3.2 Q8.3 2.2 9.3 2.2 H13.5 L15.6 4.6 M8.3 3.5 L10 4.5"/></g></svg>
<div class="t" style="left:85px;top:765.5px;font-size:13.5px;line-height:16.2px;color:#222;-webkit-text-stroke:0.22px #222;transform:scaleX(0.971);">Tube 1"x1"x7"</div>
<svg class="a" style="left:63.5px;top:790px" width="17" height="18" viewBox="0 0 17 18" ><g fill="none" stroke="#555" stroke-width="1.05" stroke-linejoin="round" stroke-linecap="round"><path d="M4 10.5 H10 V4.5 H15 Q16 4.5 16 5.5 V15.5 Q16 16.8 14.8 16.8 H5 Q4 16.8 4 15.8 Z"/><path d="M4 10.5 L2 8.8 V14.5 Q2 15.5 4 16.2 M2 8.8 H8.3 L10 10.5 M8.3 8.8 V3.2 Q8.3 2.2 9.3 2.2 H13.5 L15.6 4.6 M8.3 3.5 L10 4.5"/></g></svg>
<div class="t" style="left:85px;top:791.5px;font-size:13.5px;line-height:16.2px;color:#222;-webkit-text-stroke:0.22px #222;transform:scaleX(0.971);">Tube 1"x1"x7"</div>
<svg class="a" style="left:63.5px;top:816px" width="17" height="18" viewBox="0 0 17 18" ><g fill="none" stroke="#555" stroke-width="1.05" stroke-linejoin="round" stroke-linecap="round"><path d="M4 10.5 H10 V4.5 H15 Q16 4.5 16 5.5 V15.5 Q16 16.8 14.8 16.8 H5 Q4 16.8 4 15.8 Z"/><path d="M4 10.5 L2 8.8 V14.5 Q2 15.5 4 16.2 M2 8.8 H8.3 L10 10.5 M8.3 8.8 V3.2 Q8.3 2.2 9.3 2.2 H13.5 L15.6 4.6 M8.3 3.5 L10 4.5"/></g></svg>
<div class="t" style="left:85px;top:817.5px;font-size:13.5px;line-height:16.2px;color:#222;-webkit-text-stroke:0.22px #222;transform:scaleX(0.971);">Tube 1"x1"x8"</div>
<svg class="a" style="left:63.5px;top:842px" width="17" height="18" viewBox="0 0 17 18" ><g fill="none" stroke="#555" stroke-width="1.05" stroke-linejoin="round" stroke-linecap="round"><path d="M4 10.5 H10 V4.5 H15 Q16 4.5 16 5.5 V15.5 Q16 16.8 14.8 16.8 H5 Q4 16.8 4 15.8 Z"/><path d="M4 10.5 L2 8.8 V14.5 Q2 15.5 4 16.2 M2 8.8 H8.3 L10 10.5 M8.3 8.8 V3.2 Q8.3 2.2 9.3 2.2 H13.5 L15.6 4.6 M8.3 3.5 L10 4.5"/></g></svg>
<div class="t" style="left:85px;top:843.5px;font-size:13.5px;line-height:16.2px;color:#222;-webkit-text-stroke:0.22px #222;transform:scaleX(0.972);">Part 5</div>
<div class="a" style="left:246px;top:539px;width:32px;height:33px;border:1px solid #c8c8c8;border-left:none;box-sizing:border-box;background:#fff"></div>
<svg class="a" style="left:252px;top:546px" width="20" height="20" viewBox="0 0 20 20" ><path d="M6 3.5 H18 M6 8 H18 M6 12.5 H18 M6 17 H18 M3.5 3 V17.5" stroke="#333" stroke-width="1.3" fill="none"/><path d="M1 2 L3 4.5 L5 2" stroke="#333" stroke-width="1.1" fill="none"/></svg>
<div class="a" style="left:0;top:0;width:1919px;height:76px;background:#fafafa"></div>
<svg class="a" style="left:3px;top:9px" width="24" height="24" viewBox="0 0 24 24" ><path d="M11.4 1.9 L19.1 6.3 L19.1 15.2 L11.4 19.7 L3.7 15.3 L3.7 6.3 Z" fill="none" stroke="#55b146" stroke-width="4.3" stroke-linejoin="miter"/>
<path d="M13.2 7 L15.2 -1 M6.5 11.6 L-1 11.2 M14.8 15.5 L18.5 23" stroke="#fafafa" stroke-width="1.3"/>
<path d="M11.4 5.9 L7.2 8.3 L7.2 13.3 L11.4 15.7" fill="none" stroke="#444" stroke-width="1.25"/><path d="M12.8 6.7 L15.6 8.3 L15.6 12.2" fill="none" stroke="#444" stroke-width="1.25"/></svg>
<div class="t" style="left:30.8px;top:7.6px;font-size:19px;line-height:22.8px;color:#686868;-webkit-text-stroke:0.22px #686868;transform:scaleX(0.926);">onshape</div>
<svg class="a" style="left:112px;top:13px" width="18" height="16" viewBox="0 0 18 16" ><path d="M1 2H16.5M1 7.5H16.5M1 13H16.5" stroke="#2b2b2b" stroke-width="3"/></svg>
<div class="t" style="left:141px;top:8.4px;font-size:22px;line-height:26.4px;color:#2b2b2b;font-weight:bold;transform:scaleX(0.967);">1B - Practice Exercise Solutions</div>
<div class="t" style="left:475px;top:14.4px;font-size:16px;line-height:19.2px;color:#9a9a9a;-webkit-text-stroke:0.22px #9a9a9a;transform:scaleX(0.959);">FRCDesignLib Rework</div>
<svg class="a" style="left:643px;top:13px" width="16" height="16" viewBox="0 0 16 16" ><g fill="none" stroke="#444" stroke-width="1.7" stroke-linecap="round"><path d="M7 9.5 a2.8 2.8 0 0 0 4 0 l2.3-2.3 a2.8 2.8 0 0 0 -4 -4 l-1 1"/><path d="M9.3 6.8 a2.8 2.8 0 0 0 -4 0 l-2.3 2.3 a2.8 2.8 0 0 0 4 4 l1 -1"/></g></svg>
<svg class="a" style="left:668px;top:13px" width="19" height="16" viewBox="0 0 19 16" ><path d="M1.5 14.5 V2 H7 L8.5 4 H17.5 V14.5 Z" fill="none" stroke="#999" stroke-width="1.4" stroke-linejoin="round"/></svg>
<div class="t" style="left:693px;top:12.4px;font-size:16px;line-height:19.2px;color:#8c8c8c;-webkit-text-stroke:0.22px #8c8c8c;transform:scaleX(0.943);">Stage 1</div>
<svg class="a" style="left:795px;top:11px" width="18" height="18" viewBox="0 0 18 18" ><path d="M1 6.5 L9.5 2.5 L17.5 6 L9.5 10 Z" fill="#1b5faa"/><path d="M4.5 9 V13.5 Q9 16.5 13.5 13.5 V9 L9.5 11 Z" fill="#1b5faa"/><path d="M3 8 V14" stroke="#1b5faa" stroke-width="1.3"/></svg>
<svg class="a" style="left:821px;top:11px" width="19" height="19" viewBox="0 0 19 19" ><circle cx="9.5" cy="9.5" r="8" fill="none" stroke="#333" stroke-width="1.7"/><path d="M5 3.5 Q8 5 6.5 8 Q4 9 3 12 Q2 8 5 3.5 Z M10 2 Q14 4 12 7 Q10 9 12 11 Q14 12 13 16 Q16 14 17 10 Q17 4 10 2Z" fill="#333"/></svg>
<svg class="a" style="left:850px;top:11px" width="19" height="19" viewBox="0 0 19 19" ><g fill="none" stroke="#333" stroke-width="1.7" stroke-linejoin="round"><path d="M2 15 V3 H8 V15 Z"/><path d="M8 6 H12.5 L16.5 9.5 V17 H8"/><path d="M12.5 6 V9.5 H16.5"/></g></svg>
<div class="t" style="left:875px;top:12.6px;font-size:14px;line-height:16.8px;color:#333;-webkit-text-stroke:0.22px #333;transform:scaleX(0.985);">225</div>
<svg class="a" style="left:915px;top:11px" width="12" height="20" viewBox="0 0 12 20" ><circle cx="6" cy="10" r="2.6" fill="#222"/><path d="M6 1 V19" stroke="#222" stroke-width="1.6" stroke-dasharray="2.2 1.6"/></svg>
<div class="t" style="left:937px;top:12.6px;font-size:14px;line-height:16.8px;color:#333;-webkit-text-stroke:0.22px #333;transform:scaleX(1.027);">5280</div>
<svg class="a" style="left:981px;top:10px" width="21" height="20" viewBox="0 0 21 20" ><g fill="none" stroke="#222" stroke-width="1.6" stroke-linejoin="round"><path d="M2 9.5 H6 V18 H2 Z"/><path d="M6 10 L10 3 Q10 1.5 11.5 2 Q13 3 12 6 L11.5 8 H17 Q19 8 18.5 10 L17 16.5 Q16.5 18 15 18 H6"/></g></svg>
<div class="t" style="left:1008px;top:12.6px;font-size:14px;line-height:16.8px;color:#333;-webkit-text-stroke:0.22px #333;transform:scaleX(1.027);">4</div>
<svg class="a" style="left:1514px;top:11px" width="22" height="20" viewBox="0 0 22 20" ><g fill="none" stroke="#333" stroke-width="1.7" stroke-linecap="round" stroke-linejoin="round"><path d="M6 1.5 Q3.5 1.5 3.5 4 V7.5 Q3.5 9.5 1.5 10 Q3.5 10.5 3.5 12.5 V16 Q3.5 18.5 6 18.5"/><path d="M16 1.5 Q18.5 1.5 18.5 4 V7.5 Q18.5 9.5 20.5 10 Q18.5 10.5 18.5 12.5 V16 Q18.5 18.5 16 18.5"/><path d="M7 9.5 L10 13 L15 6"/></g></svg>
<svg class="a" style="left:1547px;top:12px" width="20" height="20" viewBox="0 0 20 20" ><path d="M10 2 Q15 2 15 9 Q15 13 17.5 15 H2.5 Q5 13 5 9 Q5 2 10 2 Z" fill="#555"/><path d="M8 16.5 Q10 19 12 16.5 Z" fill="#555"/></svg>
<div class="a" style="left:1558px;top:6px;width:16px;height:14px;background:#1b5faa;border-radius:3px"></div>
<div class="t" style="left:1560px;top:7.0px;font-size:10px;line-height:12.0px;color:#fff;font-weight:bold;transform:scaleX(1.052);">9+</div>
<svg class="a" style="left:1580px;top:12px" width="18" height="19" viewBox="0 0 18 19" ><rect x="1.5" y="1.5" width="15" height="16" rx="1.5" fill="none" stroke="#333" stroke-width="1.6"/><path d="M4 6 L5 7 L6.5 5 M4 10 L5 11 L6.5 9 M4 14 L5 15 L6.5 13" stroke="#333" stroke-width="1.2" fill="none"/><path d="M8.5 6 H14 M8.5 10 H14 M8.5 14 H14" stroke="#333" stroke-width="1.4"/></svg>
<svg class="a" style="left:1611px;top:11px" width="21" height="21" viewBox="0 0 21 21" ><g fill="none" stroke="#333" stroke-width="1.7"><rect x="2" y="2" width="6" height="6"/><rect x="2" y="12" width="6" height="6"/><rect x="12" y="12" width="6" height="6"/><path d="M15 1.5 V8.5 M11.5 5 H18.5" stroke-width="2"/></g></svg>
<svg class="a" style="left:1643px;top:11px" width="20" height="20" viewBox="0 0 20 20" ><path d="M9.5 1.5 A7.8 7.8 0 0 0 4.5 15 V19 H12.5 V16.8 H15 Q16.8 16.8 16.8 15 V12.8 L18.6 11.8 L16.9 8.8 A7.6 7.6 0 0 0 9.5 1.5 Z" fill="#5a5a5a"/><circle cx="8.3" cy="9.2" r="2.5" fill="none" stroke="#fafafa" stroke-width="1.5" stroke-dasharray="1.3 0.7"/><circle cx="8.3" cy="9.2" r="1.5" fill="#fafafa"/><circle cx="8.3" cy="9.2" r="0.7" fill="#5a5a5a"/><circle cx="12.9" cy="6.2" r="1.7" fill="none" stroke="#fafafa" stroke-width="1.1" stroke-dasharray="1 0.6"/><circle cx="12.9" cy="6.2" r="0.9" fill="#fafafa"/></svg>
<div class="a" style="left:1673px;top:3px;width:59px;height:33px;background:#1a58b4;border-radius:6px"></div>
<div class="t" style="left:1685px;top:10.0px;font-size:15px;line-height:18.0px;color:#fff;transform:scaleX(0.899);-webkit-text-stroke:0.3px #fff;">Share</div>
<svg class="a" style="left:1742px;top:12px" width="20" height="20" viewBox="0 0 20 20" ><circle cx="10" cy="10" r="9" fill="#555"/></svg>
<div class="t" style="left:1747.5px;top:13.0px;font-size:15px;line-height:18.0px;color:#fafafa;font-weight:bold;transform:scaleX(0.982);">?</div>
<svg class="a" style="left:1768px;top:19px" width="10" height="6" viewBox="0 0 10 6" ><path d="M0.5 0.5 H9.5 L5 5.5 Z" fill="#333"/></svg>
<div class="a" style="left:1789px;top:9px;width:24px;height:24px;background:#111;border-radius:2px"></div>
<svg class="a" style="left:1791px;top:11px" width="20" height="20" viewBox="0 0 20 20" ><path d="M10 1.5 L17.5 5.8 V14.2 L10 18.5 L2.5 14.2 V5.8 Z" fill="none" stroke="#27b3c9" stroke-width="1.8"/><path d="M13.5 6.5 L10 4.8 L6.5 6.8 V9 L13.5 11.5 V13.6 L10 15.4 L6.5 13.6" fill="none" stroke="#27b3c9" stroke-width="1.6"/></svg>
<div class="t" style="left:1819px;top:12.0px;font-size:15px;line-height:18.0px;color:#222;-webkit-text-stroke:0.22px #222;transform:scaleX(0.914);">Andrew Card</div>
<svg class="a" style="left:1905px;top:19px" width="10" height="6" viewBox="0 0 10 6" ><path d="M0.5 0.5 H9.5 L5 5.5 Z" fill="#333"/></svg>
<div class="a" style="left:0;top:40px;width:40px;height:36px;background:#f7f7f7;border-right:1px solid #ddd;box-sizing:border-box"></div>
<svg class="a" style="left:8.0px;top:46.0px" width="24" height="24" viewBox="0 0 24 24" ><g fill="none" stroke="#222" stroke-width="1.8" stroke-linecap="butt" stroke-linejoin="miter"><circle cx="6" cy="6.3" r="2.6"/><path d="M6 9 V19 M6 14 Q6 12 9.5 12 M6 19 Q6 19 9.5 19" stroke-linecap="round"/></g><g fill="none" stroke="#222" stroke-width="2.2" stroke-linecap="butt" stroke-linejoin="miter"><path d="M12 5.5 H22 M12 12 H22 M12 18.8 H22"/></g></svg>
<svg class="a" style="left:45.0px;top:46.0px" width="24" height="24" viewBox="0 0 24 24" ><path d="M5 10.5 L11 5 V8.3 Q18.5 8.3 18.5 16.5 V19 Q17 13 11 12.7 V16 Z" fill="#2b2b2b"/></svg>
<svg class="a" style="left:79.0px;top:46.0px" width="24" height="24" viewBox="0 0 24 24" ><path d="M19 10.5 L13 5 V8.3 Q5.5 8.3 5.5 16.5 V19 Q7 13 13 12.7 V16 Z" fill="#a8a8a8"/></svg>
<div class="a" style="left:111px;top:45px;width:1px;height:26px;background:#cfcfcf"></div>
<svg class="a" style="left:117.0px;top:46.0px" width="24" height="24" viewBox="0 0 24 24" ><rect x="4.3" y="3.8" width="15" height="15" rx="2" fill="#fafafa" stroke="#666" stroke-width="1"/><path d="M4.8 4.3 L10 9 M19 4.3 L21 6" stroke="#888" stroke-width="0.8"/><rect x="7" y="6.5" width="14" height="14" rx="1.5" fill="#fafafa" stroke="#444" stroke-width="1"/><rect x="10.5" y="10" width="10.2" height="10.2" fill="#777" stroke="#444" stroke-width="0.8"/></svg>
<svg class="a" style="left:152.0px;top:46.0px" width="24" height="24" viewBox="0 0 24 24" ><circle cx="12" cy="12" r="8.7" fill="#6b6b6b"/><path d="M12 12 L21 7.5 A10 10 0 0 1 21 16.5 Z" fill="#fafafa"/><ellipse cx="17" cy="9.8" rx="3.4" ry="1.7" fill="#fafafa" transform="rotate(-25 17 9.8)"/><ellipse cx="17" cy="14.2" rx="3.4" ry="1.7" fill="#fafafa" transform="rotate(25 17 14.2)"/><path d="M12.5 12 H20 M12.5 12 L14.5 10.3 M12.5 12 L14.5 13.7" stroke="#444" stroke-width="0.9" stroke-dasharray="2 1" fill="none"/></svg>
<div class="a" style="left:183px;top:45px;width:1px;height:26px;background:#cfcfcf"></div>
<svg class="a" style="left:189.0px;top:46.0px" width="24" height="24" viewBox="0 0 24 24" ><g fill="none" stroke="#2b2b2b" stroke-width="1.1" stroke-linecap="round" stroke-linejoin="round"><path d="M6.5 18 L19 6"/></g><circle cx="6" cy="18.6" r="1.6" fill="#fafafa" stroke="#2a63b8" stroke-width="0.9"/><circle cx="19.8" cy="5.2" r="1.6" fill="#fafafa" stroke="#2a63b8" stroke-width="0.9"/></svg>
<svg class="a" style="left:221.5px;top:55px" width="10" height="7" viewBox="0 0 10 7" ><path d="M1 1 L5 5 L9 1" fill="none" stroke="#333" stroke-width="1.8"/></svg>
<svg class="a" style="left:241.0px;top:46.0px" width="24" height="24" viewBox="0 0 24 24" ><g fill="none" stroke="#2b2b2b" stroke-width="1.2" stroke-linecap="butt" stroke-linejoin="miter"><rect x="5.5" y="5.5" width="14.5" height="13.5"/></g><circle cx="20" cy="5.2" r="1.6" fill="#fafafa" stroke="#2a63b8" stroke-width="0.9"/><circle cx="5.5" cy="19" r="1.6" fill="#fafafa" stroke="#2a63b8" stroke-width="0.9"/></svg>
<svg class="a" style="left:274px;top:55px" width="10" height="7" viewBox="0 0 10 7" ><path d="M1 1 L5 5 L9 1" fill="none" stroke="#333" stroke-width="1.8"/></svg>
<svg class="a" style="left:294.0px;top:46.0px" width="24" height="24" viewBox="0 0 24 24" ><g fill="none" stroke="#2b2b2b" stroke-width="1.1" stroke-linecap="round" stroke-linejoin="round"><circle cx="11.7" cy="12" r="8.7"/></g><circle cx="11.7" cy="12" r="1.5" fill="#fafafa" stroke="#2a63b8" stroke-width="0.9"/><circle cx="18" cy="6.2" r="1.4" fill="#fafafa" stroke="#2a63b8" stroke-width="0.9"/></svg>
<svg class="a" style="left:326px;top:55px" width="10" height="7" viewBox="0 0 10 7" ><path d="M1 1 L5 5 L9 1" fill="none" stroke="#333" stroke-width="1.8"/></svg>
<svg class="a" style="left:345.0px;top:46.0px" width="24" height="24" viewBox="0 0 24 24" ><g fill="none" stroke="#2b2b2b" stroke-width="1.1" stroke-linecap="round" stroke-linejoin="round"><path d="M4.5 16 Q4.5 6 12.5 6 Q20.5 6 20.5 16"/></g><circle cx="4.5" cy="16.5" r="1.5" fill="#fafafa" stroke="#2a63b8" stroke-width="0.9"/><circle cx="20.5" cy="16.5" r="1.5" fill="#fafafa" stroke="#2a63b8" stroke-width="0.9"/><circle cx="12.5" cy="5.8" r="1.5" fill="#fafafa" stroke="#2a63b8" stroke-width="0.9"/><path d="M10.5 14.5 H14.5 M12.5 12.5 V16.5" stroke="#333" stroke-width="1"/></svg>
<svg class="a" style="left:378px;top:55px" width="10" height="7" viewBox="0 0 10 7" ><path d="M1 1 L5 5 L9 1" fill="none" stroke="#333" stroke-width="1.8"/></svg>
<svg class="a" style="left:397.0px;top:46.0px" width="24" height="24" viewBox="0 0 24 24" ><g fill="none" stroke="#2c4a7c" stroke-width="1.5" stroke-linecap="round" stroke-linejoin="round"><path d="M12.5 4.5 L20 10 L17 19.5 H8 L5 10 Z"/></g><circle cx="12.5" cy="12.3" r="2" fill="#fafafa" stroke="#2a63b8" stroke-width="0.9"/><circle cx="18" cy="7.5" r="1.5" fill="#fafafa" stroke="#2a63b8" stroke-width="0.9"/><circle cx="12.5" cy="4.5" r="1.3" fill="#fafafa" stroke="#2a63b8" stroke-width="0.9"/></svg>
<svg class="a" style="left:430px;top:55px" width="10" height="7" viewBox="0 0 10 7" ><path d="M1 1 L5 5 L9 1" fill="none" stroke="#333" stroke-width="1.8"/></svg>
<svg class="a" style="left:449.0px;top:46.0px" width="24" height="24" viewBox="0 0 24 24" ><g fill="none" stroke="#2c4a7c" stroke-width="1.1" stroke-linecap="round" stroke-linejoin="round"><path d="M5.5 18.5 Q6.5 11 12 11.5 Q17.5 12 19 5.5"/></g><circle cx="5.2" cy="19" r="1.6" fill="#fafafa" stroke="#2a63b8" stroke-width="0.9"/><circle cx="19.5" cy="5" r="1.6" fill="#fafafa" stroke="#2a63b8" stroke-width="0.9"/><circle cx="12.3" cy="11.5" r="1.6" fill="#fafafa" stroke="#2a63b8" stroke-width="0.9"/></svg>
<svg class="a" style="left:482px;top:55px" width="10" height="7" viewBox="0 0 10 7" ><path d="M1 1 L5 5 L9 1" fill="none" stroke="#333" stroke-width="1.8"/></svg>
<svg class="a" style="left:502.0px;top:46.0px" width="24" height="24" viewBox="0 0 24 24" ><g fill="none" stroke="#2a63b8" stroke-width="1.2" stroke-linecap="round" stroke-linejoin="round"><circle cx="12" cy="12" r="3"/></g></svg>
<svg class="a" style="left:535.0px;top:46.0px" width="24" height="24" viewBox="0 0 24 24" ><text x="12.5" y="19.5" font-size="19" font-weight="bold" text-anchor="middle" fill="#fafafa" stroke="#444" stroke-width="1">A</text><g fill="none" stroke="#555" stroke-width="0.8" stroke-linecap="round" stroke-linejoin="round"><rect x="4.5" y="3.5" width="16" height="17" stroke-dasharray="1 1.6"/></g><circle cx="20.8" cy="3.3" r="1.6" fill="#fafafa" stroke="#2a63b8" stroke-width="0.9"/><circle cx="4.2" cy="20.8" r="1.6" fill="#fafafa" stroke="#2a63b8" stroke-width="0.9"/></svg>
<svg class="a" style="left:569.0px;top:46.0px" width="24" height="24" viewBox="0 0 24 24" ><rect x="5.5" y="4.5" width="15" height="15" rx="2" fill="none" stroke="#444" stroke-width="1.1"/><path d="M9 8 H20 M9 8 V19.5" stroke="#444" stroke-width="0.9" fill="none"/><path d="M8.8 8 V19.3" stroke="#2a63b8" stroke-width="1.3"/><path d="M5.8 5 L9 8" stroke="#444" stroke-width="0.9"/></svg>
<svg class="a" style="left:601.5px;top:55px" width="10" height="7" viewBox="0 0 10 7" ><path d="M1 1 L5 5 L9 1" fill="none" stroke="#333" stroke-width="1.8"/></svg>
<svg class="a" style="left:622.0px;top:46.0px" width="24" height="24" viewBox="0 0 24 24" ><g fill="none" stroke="#2a63b8" stroke-width="1.8" stroke-linecap="butt" stroke-linejoin="miter"><path d="M5.5 4 V20"/></g><g fill="none" stroke="#2b2b2b" stroke-width="1.6" stroke-linecap="butt" stroke-linejoin="miter"><path d="M19.7 4 V20" stroke-dasharray="3.2 2.2"/></g><g fill="none" stroke="#2b2b2b" stroke-width="1.1" stroke-linecap="butt" stroke-linejoin="miter"><path d="M9 9 H17 M11 7 L9 9 L11 11"/></g><g fill="none" stroke="#2a63b8" stroke-width="1.1" stroke-linecap="butt" stroke-linejoin="miter"><path d="M9 15 H17 M15 13 L17 15 L15 17"/></g></svg>
<div class="a" style="left:652px;top:45px;width:1px;height:26px;background:#cfcfcf"></div>
<svg class="a" style="left:659.0px;top:46.0px" width="24" height="24" viewBox="0 0 24 24" ><g fill="none" stroke="#2b2b2b" stroke-width="1.5" stroke-linecap="round" stroke-linejoin="round"><path d="M6 19 Q6 6 20 5.5"/></g><g fill="none" stroke="#666" stroke-width="0.8" stroke-linecap="round" stroke-linejoin="round"><path d="M6 19 V5.5 H20" stroke-dasharray="1 1.5"/></g><g fill="none" stroke="#2a63b8" stroke-width="1.3" stroke-linecap="round" stroke-linejoin="round"><path d="M6 19 V16 M17 5.6 H20"/></g></svg>
<svg class="a" style="left:691.5px;top:55px" width="10" height="7" viewBox="0 0 10 7" ><path d="M1 1 L5 5 L9 1" fill="none" stroke="#333" stroke-width="1.8"/></svg>
<svg class="a" style="left:711.5px;top:46.0px" width="24" height="24" viewBox="0 0 24 24" ><g fill="none" stroke="#2b2b2b" stroke-width="2" stroke-linecap="round" stroke-linejoin="round"><path d="M8.5 9.5 L19 17.5 M8.5 14.5 L19 6.5"/></g><g fill="none" stroke="#2b2b2b" stroke-width="1.7" stroke-linecap="round" stroke-linejoin="round"><circle cx="6.8" cy="7.7" r="2.2"/><circle cx="6.8" cy="16.3" r="2.2"/></g></svg>
<svg class="a" style="left:743.5px;top:55px" width="10" height="7" viewBox="0 0 10 7" ><path d="M1 1 L5 5 L9 1" fill="none" stroke="#333" stroke-width="1.8"/></svg>
<svg class="a" style="left:763.0px;top:46.0px" width="24" height="24" viewBox="0 0 24 24" ><g fill="none" stroke="#333" stroke-width="1" stroke-linecap="butt" stroke-linejoin="miter"><path d="M6.5 19.5 V9 Q6.5 4.5 11 4.5 Q15.5 4.5 15.5 9 V12.5 H19 V19.5 H12 V9 Q12 8 11 8 Q10 8 10 9 V19.5"/></g><g fill="none" stroke="#2a63b8" stroke-width="1" stroke-linecap="butt" stroke-linejoin="miter"><path d="M8.2 19 V9 Q8.2 6.2 11 6.2 Q13.8 6.2 13.8 9 V14.2 H17.5 V19"/></g></svg>
<svg class="a" style="left:795.5px;top:55px" width="10" height="7" viewBox="0 0 10 7" ><path d="M1 1 L5 5 L9 1" fill="none" stroke="#333" stroke-width="1.8"/></svg>
<svg class="a" style="left:815.5px;top:46.0px" width="24" height="24" viewBox="0 0 24 24" ><g fill="none" stroke="#2b2b2b" stroke-width="1.6" stroke-linecap="butt" stroke-linejoin="miter"><path d="M4.5 4.5 H8 V16 H11 V19.5 H4.5 Z" /></g><g fill="none" stroke="#2b2b2b" stroke-width="1" stroke-linecap="butt" stroke-linejoin="miter"><path d="M12.8 4 V20" stroke-dasharray="3 1.5 1 1.5"/></g><g fill="none" stroke="#2a63b8" stroke-width="1" stroke-linecap="butt" stroke-linejoin="miter"><path d="M20.5 4.5 V19.5 H15 V14"/><path d="M18 4.5 V16.5 H15"/></g></svg>
<svg class="a" style="left:849.5px;top:46.0px" width="24" height="24" viewBox="0 0 24 24" ><rect x="4.5" y="4.5" width="6" height="6" fill="#8a8a8a" stroke="#555" stroke-width="1"/><g fill="none" stroke="#2a63b8" stroke-width="1.2" stroke-linecap="butt" stroke-linejoin="miter"><rect x="14" y="4.5" width="6" height="6"/><rect x="4.5" y="14" width="6" height="6"/><rect x="14" y="14" width="6" height="6"/></g></svg>
<svg class="a" style="left:881.5px;top:55px" width="10" height="7" viewBox="0 0 10 7" ><path d="M1 1 L5 5 L9 1" fill="none" stroke="#333" stroke-width="1.8"/></svg>
<svg class="a" style="left:901.5px;top:46.0px" width="24" height="24" viewBox="0 0 24 24" ><g fill="none" stroke="#333" stroke-width="1.1" stroke-linecap="butt" stroke-linejoin="miter"><path d="M5.5 20.5 V4 H14 L19.5 9 V20.5 Z"/><path d="M14 4 V9 H19.5"/></g><path d="M10 3 V9 M7.5 6.8 L10 9.3 L12.5 6.8" stroke="#333" stroke-width="1.5" fill="none"/><text x="12.5" y="19" font-size="6.6" fill="#222" text-anchor="middle" font-weight="bold">DXF</text></svg>
<svg class="a" style="left:933.5px;top:55px" width="10" height="7" viewBox="0 0 10 7" ><path d="M1 1 L5 5 L9 1" fill="none" stroke="#333" stroke-width="1.8"/></svg>
<div class="a" style="left:950px;top:45px;width:1px;height:26px;background:#cfcfcf"></div>
<svg class="a" style="left:958.0px;top:46.0px" width="24" height="24" viewBox="0 0 24 24" ><g fill="none" stroke="#2b2b2b" stroke-width="1.5" stroke-linecap="round" stroke-linejoin="round"><path d="M6 18 L18.5 7"/><path d="M14 6 L18.8 6.5 L18.5 11.5 M5.5 13 L5.8 18.3 L11 18.5" /></g><g fill="none" stroke="#2b2b2b" stroke-width="0.8" stroke-linecap="round" stroke-linejoin="round"><path d="M16 4 L21 9.5 M3 14 L8.5 20"/></g></svg>
<div class="a" style="left:988px;top:45px;width:1px;height:26px;background:#cfcfcf"></div>
<svg class="a" style="left:995.5px;top:46.0px" width="24" height="24" viewBox="0 0 24 24" ><g fill="none" stroke="#2a63b8" stroke-width="1" stroke-linecap="round" stroke-linejoin="round"><path d="M4 18.5 L19 4"/></g><g fill="none" stroke="#2b2b2b" stroke-width="2.2" stroke-linecap="round" stroke-linejoin="round"><path d="M12 11.5 L20 19.5"/></g><circle cx="12" cy="11.2" r="2.2" fill="#2b2b2b"/></svg>
<svg class="a" style="left:1030.0px;top:46.0px" width="24" height="24" viewBox="0 0 24 24" ><g fill="none" stroke="#2a63b8" stroke-width="1.1" stroke-linecap="round" stroke-linejoin="round"><circle cx="12" cy="12" r="8.3"/></g><g fill="none" stroke="#2b2b2b" stroke-width="2" stroke-linecap="round" stroke-linejoin="round"><circle cx="12" cy="12" r="4.6"/></g></svg>
<svg class="a" style="left:1063.5px;top:46.0px" width="24" height="24" viewBox="0 0 24 24" ><g fill="none" stroke="#2b2b2b" stroke-width="2.2" stroke-linecap="round" stroke-linejoin="round"><path d="M5 7.5 L17 19"/></g><g fill="none" stroke="#2a63b8" stroke-width="1" stroke-linecap="round" stroke-linejoin="round"><path d="M8 4.5 L20.5 16.5"/></g></svg>
<svg class="a" style="left:1098.0px;top:46.0px" width="24" height="24" viewBox="0 0 24 24" ><g fill="none" stroke="#2b2b2b" stroke-width="2.2" stroke-linecap="round" stroke-linejoin="round"><path d="M4.5 18.5 L19 4.5"/></g><g fill="none" stroke="#2a63b8" stroke-width="1.1" stroke-linecap="round" stroke-linejoin="round"><circle cx="15.3" cy="14.5" r="4.6"/></g></svg>
<svg class="a" style="left:1132.0px;top:46.0px" width="24" height="24" viewBox="0 0 24 24" ><g fill="none" stroke="#2b2b2b" stroke-width="2.4" stroke-linecap="butt" stroke-linejoin="miter"><path d="M4 12 H20"/></g></svg>
<svg class="a" style="left:1165.5px;top:46.0px" width="24" height="24" viewBox="0 0 24 24" ><g fill="none" stroke="#2b2b2b" stroke-width="2.4" stroke-linecap="butt" stroke-linejoin="miter"><path d="M12 4 V19.5"/></g></svg>
<svg class="a" style="left:1200.0px;top:46.0px" width="24" height="24" viewBox="0 0 24 24" ><g fill="none" stroke="#2b2b2b" stroke-width="2.4" stroke-linecap="butt" stroke-linejoin="miter"><path d="M3 19 H21"/></g><g fill="none" stroke="#2b2b2b" stroke-width="1.6" stroke-linecap="butt" stroke-linejoin="miter"><path d="M12 4 V19"/></g><g fill="none" stroke="#2a63b8" stroke-width="1" stroke-linecap="butt" stroke-linejoin="miter"><path d="M12 13 H17.8 V19"/></g></svg>
<svg class="a" style="left:1233.5px;top:46.0px" width="24" height="24" viewBox="0 0 24 24" ><g fill="none" stroke="#2b2b2b" stroke-width="2.2" stroke-linecap="butt" stroke-linejoin="miter"><path d="M7 9.8 H17 M7 14.2 H17"/></g></svg>
<svg class="a" style="left:1267.5px;top:46.0px" width="24" height="24" viewBox="0 0 24 24" ><g fill="none" stroke="#2a63b8" stroke-width="1.2" stroke-linecap="butt" stroke-linejoin="miter"><path d="M3.5 12 H9 M15 12 H20.5" stroke-dasharray="2.5 1.2"/></g><circle cx="12" cy="12" r="2.6" fill="#2b2b2b"/></svg>
<svg class="a" style="left:1302.0px;top:46.0px" width="24" height="24" viewBox="0 0 24 24" ><g fill="none" stroke="#2a63b8" stroke-width="1.1" stroke-linecap="round" stroke-linejoin="round"><path d="M4.5 9.5 Q12 10.5 14.5 19"/></g><g fill="none" stroke="#2b2b2b" stroke-width="2.2" stroke-linecap="round" stroke-linejoin="round"><path d="M11.5 11.5 L19 4.5"/></g></svg>
<svg class="a" style="left:1336.0px;top:46.0px" width="24" height="24" viewBox="0 0 24 24" ><g fill="none" stroke="#2a63b8" stroke-width="1.1" stroke-linecap="round" stroke-linejoin="round"><path d="M4 4 Q7 17 19 19"/></g><g fill="none" stroke="#2b2b2b" stroke-width="2.2" stroke-linecap="round" stroke-linejoin="round"><path d="M10 16 L18.5 4.5"/></g><circle cx="9.8" cy="16" r="2.3" fill="#2b2b2b"/></svg>
<svg class="a" style="left:1370.0px;top:46.0px" width="24" height="24" viewBox="0 0 24 24" ><g fill="none" stroke="#2b2b2b" stroke-width="1.5" stroke-linecap="butt" stroke-linejoin="miter"><path d="M10.5 6.5 V5 H3.5 L8 12 L3.5 19 H10.5 V17.5"/></g><g fill="none" stroke="#2a63b8" stroke-width="1.1" stroke-linecap="butt" stroke-linejoin="miter"><path d="M13.5 6.5 V5 H20.5 L16 12 L20.5 19 H13.5 V17.5"/></g><g fill="none" stroke="#333" stroke-width="1" stroke-linecap="butt" stroke-linejoin="miter"><path d="M12 3 V21" stroke-dasharray="2.5 1.5"/></g></svg>
<svg class="a" style="left:1404.0px;top:46.0px" width="24" height="24" viewBox="0 0 24 24" ><g fill="none" stroke="#2a63b8" stroke-width="2.2" stroke-linecap="butt" stroke-linejoin="miter"><path d="M4 11 H20"/></g><g fill="none" stroke="#2a63b8" stroke-width="1" stroke-linecap="butt" stroke-linejoin="miter"><path d="M5 15 L7 12 M8 15 L10 12 M11 15 L13 12 M14 15 L16 12 M17 15 L19 12"/></g></svg>
<svg class="a" style="left:1438.0px;top:46.0px" width="24" height="24" viewBox="0 0 24 24" ><g fill="none" stroke="#2a63b8" stroke-width="1.8" stroke-linecap="round" stroke-linejoin="round"><path d="M4 19.5 Q4.5 9.5 12 9.5"/></g><g fill="none" stroke="#2b2b2b" stroke-width="1.8" stroke-linecap="round" stroke-linejoin="round"><path d="M12 9.5 Q19.5 9.5 20 19.5"/></g><g fill="none" stroke="#555" stroke-width="0.8" stroke-linecap="round" stroke-linejoin="round"><path d="M3.6 14.5 L1.6 13.5 M4.8 11.8 L3 10 M7 9.8 L5.8 7.2 M9.5 8.6 L9 5.8 M12 8.2 V5.2 M14.5 8.6 L15 5.8 M17 9.8 L18.2 7.2 M19.2 11.8 L21 10 M20.4 14.5 L22.4 13.5"/></g></svg>
<div class="a" style="left:1478px;top:43px;width:161px;height:31px;background:#ededed;border-radius:3px"></div>
<div class="t" style="left:1488px;top:49.6px;font-size:14px;line-height:16.8px;color:#222;-webkit-text-stroke:0.22px #222;transform:scaleX(0.972);">Search tools...</div>
<div class="a" style="left:1578px;top:49px;width:33px;height:18px;border:1px solid #aaa;border-radius:3px;box-sizing:border-box;background:#f5f5f5"></div>
<div class="t" style="left:1581px;top:52.7px;font-size:10.5px;line-height:12.6px;color:#333;-webkit-text-stroke:0.22px #333;transform:scaleX(1.249);">alt/</div>
<svg class="a" style="left:1598.5px;top:55px" width="11" height="9" viewBox="0 0 11 9" ><path d="M0.5 2 H3.2 L6.5 7.2 H10.5 M6.8 2 H10.5" fill="none" stroke="#333" stroke-width="1"/></svg>
<div class="a" style="left:1613px;top:49px;width:16px;height:18px;border:1px solid #aaa;border-radius:3px;box-sizing:border-box;background:#f5f5f5"></div>
<div class="t" style="left:1618.5px;top:52.7px;font-size:10.5px;line-height:12.6px;color:#333;-webkit-text-stroke:0.22px #333;transform:scaleX(1.048);">c</div>
<div class="a" style="left:322px;top:79px;width:220px;height:220px;background:#fff;box-shadow:0 2px 8px rgba(0,0,0,0.28)"></div>
<div class="t" style="left:328px;top:85.6px;font-size:13.5px;line-height:16.2px;color:#222;transform:scaleX(0.976);-webkit-text-stroke:0.45px #222;">Plate Sketch</div>
<div class="a" style="left:486px;top:79px;width:28px;height:28px;background:#0e8f12"></div>
<svg class="a" style="left:490px;top:84px" width="20" height="18" viewBox="0 0 20 18" ><path d="M3 9.5 L8 14 L17 4" fill="none" stroke="#fff" stroke-width="3"/></svg>
<svg class="a" style="left:521px;top:87px" width="14" height="14" viewBox="0 0 14 14" ><path d="M2 2 L12 12 M12 2 L2 12" stroke="#c0272d" stroke-width="3"/></svg>
<div class="a" style="left:322px;top:107px;width:220px;height:1px;background:#ddd"></div>
<div class="a" style="left:325px;top:113px;width:188px;height:44px;border:1px solid #d8d8d8;box-sizing:border-box;border-radius:2px"></div>
<div class="t" style="left:331px;top:118.2px;font-size:10.5px;line-height:12.6px;color:#444;-webkit-text-stroke:0.22px #444;transform:scaleX(0.955);">Sketch plane</div>
<div class="t" style="left:332px;top:138.4px;font-size:13.5px;line-height:16.2px;color:#333;-webkit-text-stroke:0.22px #333;transform:scaleX(0.947);">Face of Tubes</div>
<svg class="a" style="left:492px;top:141px" width="10" height="10" viewBox="0 0 10 10" ><path d="M1.5 1.5 L8.5 8.5 M8.5 1.5 L1.5 8.5" stroke="#444" stroke-width="1.2"/></svg>
<svg class="a" style="left:516px;top:115px" width="20" height="20" viewBox="0 0 20 20" ><circle cx="10" cy="10" r="8.3" fill="none" stroke="#333" stroke-width="1.2"/><circle cx="10" cy="10" r="6" fill="none" stroke="#333" stroke-width="1.2"/><path d="M10 4.5 V10.5 H15" fill="none" stroke="#333" stroke-width="1.4"/></svg>
<div class="a" style="left:326px;top:170px;width:12px;height:12px;background:#1b5faa;border-radius:2px"></div>
<svg class="a" style="left:326px;top:170px" width="12" height="12" viewBox="0 0 12 12" ><path d="M2.5 6 L5 8.5 L9.5 3.5" fill="none" stroke="#fff" stroke-width="1.8"/></svg>
<div class="t" style="left:342px;top:169.2px;font-size:13.5px;line-height:16.2px;color:#333;-webkit-text-stroke:0.22px #333;transform:scaleX(0.988);">Disable imprinting</div>
<div class="a" style="left:326px;top:198px;width:12px;height:12px;border:1px solid #888;border-radius:2px;box-sizing:border-box;background:#fff"></div>
<div class="t" style="left:342px;top:197.2px;font-size:13.5px;line-height:16.2px;color:#333;-webkit-text-stroke:0.22px #333;transform:scaleX(0.983);">Show constraints</div>
<div class="a" style="left:326px;top:225px;width:12px;height:12px;background:#1b5faa;border-radius:2px"></div>
<svg class="a" style="left:326px;top:225px" width="12" height="12" viewBox="0 0 12 12" ><path d="M2.5 6 L5 8.5 L9.5 3.5" fill="none" stroke="#fff" stroke-width="1.8"/></svg>
<div class="t" style="left:342px;top:224.2px;font-size:13.5px;line-height:16.2px;color:#333;-webkit-text-stroke:0.22px #333;transform:scaleX(0.958);">Show expressions</div>
<div class="a" style="left:326px;top:252px;width:12px;height:12px;background:#1b5faa;border-radius:2px"></div>
<svg class="a" style="left:326px;top:252px" width="12" height="12" viewBox="0 0 12 12" ><path d="M2.5 6 L5 8.5 L9.5 3.5" fill="none" stroke="#fff" stroke-width="1.8"/></svg>
<div class="t" style="left:342px;top:251.2px;font-size:13.5px;line-height:16.2px;color:#333;-webkit-text-stroke:0.22px #333;transform:scaleX(0.976);">Show errors</div>
<div class="a" style="left:441px;top:274px;width:22px;height:22px;border:1px solid #999;border-radius:3px;box-sizing:border-box;background:#f4f4f4"></div>
<svg class="a" style="left:442px;top:275px" width="20" height="20" viewBox="0 0 20 20" ><circle cx="10" cy="10" r="7.5" fill="none" stroke="#222" stroke-width="1.2"/><path d="M5 14 L13 5 L15 7 L7.5 15 Z M3 15.5 H13 M15 15 L18 18" fill="none" stroke="#222" stroke-width="1.1"/><path d="M3.5 16 H13" stroke="#55c" stroke-width="1"/></svg>
<div class="a" style="left:467px;top:274px;width:49px;height:22px;border:1px solid #aaa;border-radius:3px;box-sizing:border-box;background:#fff"></div>
<div class="t" style="left:478px;top:277.7px;font-size:13px;line-height:15.6px;color:#222;-webkit-text-stroke:0.22px #222;transform:scaleX(0.958);">Final</div>
<svg class="a" style="left:524.5px;top:281.5px" width="13" height="13" viewBox="0 0 13 13" ><circle cx="6.5" cy="6.5" r="6.3" fill="#a2a2a2"/><path d="M4.5 5.2 Q4.5 3.2 6.5 3.2 Q8.6 3.2 8.6 5 Q8.6 6.2 7.3 6.8 Q6.6 7.2 6.6 8.2" fill="none" stroke="#fff" stroke-width="1.5"/><circle cx="6.6" cy="10.2" r="0.95" fill="#fff"/></svg>
<svg class="a" style="left:1700px;top:70px" width="219" height="190" viewBox="0 0 219 190" >
<path d="M122.5 30.8 L130 21 L137.5 30.8 Z" fill="#a6a6a6"/>
<path d="M122.5 161 L130 170.8 L137.5 161 Z" fill="#a6a6a6"/>
<path d="M65 89 L55 96 L65 103 Z" fill="#a6a6a6"/>
<path d="M195 89 L205 96 L195 103 Z" fill="#a6a6a6"/>
<path d="M109 31 Q90 37 78 52" fill="none" stroke="#a6a6a6" stroke-width="4"/>
<path d="M76 44 L77 54.5 L88 53.5 Z" fill="#a6a6a6" stroke="#a6a6a6" stroke-width="1.5" stroke-linejoin="round"/>
<path d="M151 31 Q170 37 182 52" fill="none" stroke="#a6a6a6" stroke-width="4"/>
<path d="M184 44 L183 54.5 L172 53.5 Z" fill="#a6a6a6" stroke="#a6a6a6" stroke-width="1.5" stroke-linejoin="round"/>
<path d="M112.2 68 H147.9 V78.1 H158.2 V113.2 H147.9 V123.8 H112.2 V113.2 H102.2 V78.1 H112.2 Z" fill="#e6e8eb"/>
<path d="M121.3 73.8 H138.7 Q148.1 77.8 152.2 87.3 V105.2 Q148.1 114.7 138.7 118.7 H121.3 Q111.8 114.7 107.8 105.2 V87.3 Q111.8 77.8 121.3 73.8 Z" fill="#fff"/>
<path d="M99.5 67 V126.5" stroke="#2a2ab0" stroke-width="1.3"/>
<path d="M99 126.5 H158.5" stroke="#2fa82f" stroke-width="1.3"/>
</svg>
<div class="t" style="left:1816px;top:156.4px;font-size:13.5px;line-height:16.2px;color:#111;-webkit-text-stroke:0.22px #111;transform:scaleX(0.888);">Right</div>
<div class="t" style="left:1795px;top:119.8px;font-size:12px;line-height:14.4px;color:#5a50d0;-webkit-text-stroke:0.22px #5a50d0;transform:scaleX(1.091);">Z</div>
<div class="t" style="left:1864px;top:188.3px;font-size:12px;line-height:14.4px;color:#2fa82f;-webkit-text-stroke:0.22px #2fa82f;">Y</div>
<svg class="a" style="left:1865px;top:222px" width="21" height="21" viewBox="0 0 21 21" ><path d="M10 1.5 L18.5 4.5 V14 L10 19 L1.5 14 V4.5 Z" fill="#ececec" stroke="#555" stroke-width="1.1" stroke-linejoin="round"/><path d="M1.5 4.5 L10 8 L18.5 4.5 L10 1.5 Z" fill="#f6f6f6" stroke="#555" stroke-width="0.9"/><path d="M10 8 V19 L1.5 14 V4.5 Z" fill="#bdbdbd" stroke="#555" stroke-width="0.9"/></svg>
<svg class="a" style="left:1892px;top:229px" width="9" height="6" viewBox="0 0 9 6" ><path d="M0.5 0.5 H8.5 L4.5 4.5 Z" fill="#222"/></svg>
<div class="a" style="left:1888px;top:433px;width:32px;height:132px;border:1px solid #c4c4c4;box-sizing:border-box;background:#fff"></div>
<div class="a" style="left:1888px;top:466px;width:32px;height:1px;background:#c4c4c4"></div>
<div class="a" style="left:1888px;top:499px;width:32px;height:1px;background:#c4c4c4"></div>
<div class="a" style="left:1888px;top:532px;width:32px;height:1px;background:#c4c4c4"></div>
<div class="a" style="left:1888px;top:576px;width:32px;height:100px;border:1px solid #c4c4c4;box-sizing:border-box;background:#fff"></div>
<div class="a" style="left:1888px;top:609px;width:32px;height:1px;background:#c4c4c4"></div>
<div class="a" style="left:1888px;top:642px;width:32px;height:1px;background:#c4c4c4"></div>
<svg class="a" style="left:1893px;top:439px" width="24" height="24" viewBox="0 0 24 24" ><path d="M3 19 L11 3 L13 4 L8 19 Z" fill="#999"/><path d="M6 19 L14 5 L17 7 L10 19 Z" fill="#888"/><path d="M9 19 L17 9 L20 12 V19 Z" fill="#aaa"/><rect x="2.5" y="15" width="18" height="6" rx="3" fill="#e8e8e8" stroke="#888" stroke-width="1"/><circle cx="6" cy="18" r="1.2" fill="#666"/></svg>
<svg class="a" style="left:1893px;top:472px" width="24" height="24" viewBox="0 0 24 24" ><path d="M11 9 L17 6.5 L22 9.5 V16.5 L16 19.5 L11 16 Z M11 9 L16 12 L22 9.5 M16 12 V19.5" fill="none" stroke="#333" stroke-width="1.2" stroke-linejoin="round"/><rect x="2.5" y="2" width="10" height="8.5" fill="#1b5faa"/><path d="M2.5 4.8 H12.5 M2.5 7.6 H12.5 M5.8 2 V10.5 M9.2 2 V10.5" stroke="#fff" stroke-width="0.8"/></svg>
<svg class="a" style="left:1893px;top:505px" width="24" height="24" viewBox="0 0 24 24" ><rect x="2.5" y="2" width="10" height="8.5" fill="#333"/><path d="M2.5 4.8 H12.5 M2.5 7.6 H12.5 M5.8 2 V10.5 M9.2 2 V10.5" stroke="#fff" stroke-width="0.8"/><path d="M9 11 L14 8.5 L19 11 V17 L14 19.5 L9 17 Z M9 11 L14 13.5 L19 11 M14 13.5 V19.5" fill="#ccc" stroke="#444" stroke-width="1" stroke-linejoin="round"/><path d="M7 6 Q5 6 5 8.5 V11.5 Q5 13 3.5 13.5 Q5 14 5 15.5 V18 Q5 20.5 7 20.5 M20 6 Q22 6 22 8.5 V11.5 Q22 13 23.5 13.5 Q22 14 22 15.5 V18 Q22 20.5 20 20.5" fill="none" stroke="#444" stroke-width="1"/></svg>
<svg class="a" style="left:1893px;top:538px" width="24" height="24" viewBox="0 0 24 24" ><rect x="2.5" y="2" width="10" height="8.5" fill="#333"/><path d="M2.5 4.8 H12.5 M2.5 7.6 H12.5 M5.8 2 V10.5 M9.2 2 V10.5" stroke="#fff" stroke-width="0.8"/><path d="M5 6 Q1.5 13 5 20 M20.5 8 Q23.5 14 20.5 20" fill="none" stroke="#222" stroke-width="1.5"/><text x="13" y="19" font-size="17" font-style="italic" font-family="Liberation Serif" fill="#222" text-anchor="middle" font-weight="bold">x</text></svg>
<svg class="a" style="left:1892px;top:581px" width="25" height="25" viewBox="0 0 25 25" ><rect x="0.5" y="0.5" width="24" height="24" rx="3" fill="#d8d8d8"/><path d="M3 9.5 L6 8 H19 L22 9.5 V17 L19.5 19.5 H5.5 L3 17 Z" fill="#333"/><circle cx="8.5" cy="13" r="3.2" fill="#8ec5f0"/><circle cx="16" cy="13" r="3.2" fill="#8ec5f0"/><circle cx="9" cy="13.2" r="1.4" fill="#fff"/><circle cx="16.5" cy="13.2" r="1.4" fill="#fff"/><path d="M12.5 8 V3" stroke="#333" stroke-width="1.2"/><path d="M6 2 V5 M8.5 3 V5 M16 3 V5 M18.5 2 V5" stroke="#1b5faa" stroke-width="1"/><path d="M10 17 Q12.5 18.5 15 17" stroke="#fff" stroke-width="0.9" fill="none"/></svg>
<svg class="a" style="left:1892px;top:614px" width="25" height="25" viewBox="0 0 25 25" ><rect x="0.5" y="0.5" width="24" height="24" rx="2" fill="#5cb85c" stroke="#bbb" stroke-width="1"/><path d="M4.5 6.5 Q8.5 5 12 7 V19 Q8.5 17.5 4.5 18.5 Z M20.5 6.5 Q16.5 5 13 7 V19 Q16.5 17.5 20.5 18.5 Z" fill="#fff"/></svg>
<svg class="a" style="left:1892px;top:647px" width="25" height="25" viewBox="0 0 25 25" ><rect x="0.5" y="0.5" width="24" height="24" rx="2" fill="#1454c4" stroke="#bbb" stroke-width="1"/><rect x="2" y="2" width="21" height="21" fill="none" stroke="#111" stroke-width="1.2"/><path d="M4.5 6.5 Q8.5 5 12 7 V19 Q8.5 17.5 4.5 18.5 Z M20.5 6.5 Q16.5 5 13 7 V19 Q16.5 17.5 20.5 18.5 Z" fill="#fff"/></svg>
<svg class="a" style="left:1821px;top:1029px" width="18" height="16" viewBox="0 0 18 16" ><path d="M1.5 8.5 H13 V13.5 H1.5 Z" fill="#fff" stroke="#333" stroke-width="1.2"/><ellipse cx="11" cy="5.5" rx="5" ry="3.3" fill="#fff" stroke="#333" stroke-width="1.2"/><ellipse cx="11" cy="5.2" rx="2.2" ry="1.2" fill="none" stroke="#333" stroke-width="1"/><path d="M16 5.5 V10 Q16 13 13 13.5" fill="none" stroke="#333" stroke-width="1.2"/><path d="M4 11 V13 M6.5 11 V13 M9 11 V13 M11.5 11 V13" stroke="#333" stroke-width="0.8"/></svg>
<svg class="a" style="left:1854px;top:1028px" width="22" height="16" viewBox="0 0 22 16" ><path d="M1 14.5 A10 12.5 0 0 1 21 14.5 Z" fill="#fff" stroke="#333" stroke-width="1.3"/><path d="M6.2 14.5 A4.8 6 0 0 1 15.8 14.5" fill="none" stroke="#333" stroke-width="2.2"/><path d="M3.2 13.5 A7.8 10 0 0 1 18.8 13.5" fill="none" stroke="#777" stroke-width="1.5" stroke-dasharray="0.8 1"/></svg>
<svg class="a" style="left:1891px;top:1028px" width="18" height="17" viewBox="0 0 18 17" ><path d="M2 2 H16 M9 2 V13 M2 12 H16" stroke="#333" stroke-width="1.3"/><path d="M1.5 14.5 H16.5" stroke="#222" stroke-width="2.2"/><path d="M3.5 2.5 L1.5 9 H6 Z M14.5 2.5 L12.5 9 H17 Z" fill="none" stroke="#333" stroke-width="0.9"/><path d="M1.5 9 H6 M12.5 9 H17" stroke="#222" stroke-width="2"/></svg>
<div class="a" style="left:40px;top:1050px;width:1879px;height:29px;background:#d7d7d7"></div>
<div class="a" style="left:41px;top:1050px;width:31px;height:29px;background:#e3e3e3"></div>
<svg class="a" style="left:47px;top:1055px" width="18" height="18" viewBox="0 0 18 18" ><path d="M9 2 V16 M2 9 H16" stroke="#444" stroke-width="2.4"/></svg>
<div class="a" style="left:74px;top:1050px;width:38px;height:29px;background:#e3e3e3"></div>
<svg class="a" style="left:81px;top:1053px" width="21" height="19" viewBox="0 0 21 19" ><path d="M10.5 1.5 L19.5 10 V18 H13 V12 H8 V18 H1.5 V10 Z" fill="#555"/><path d="M15 2.5 H17.5 V7 L15 5 Z" fill="#555"/></svg>
<svg class="a" style="left:108px;top:1050px" width="128" height="29" viewBox="0 0 128 29" ><path d="M0 0 H118 L127 14.5 L118 29 H0 L9 14.5 Z" fill="#fff"/></svg>
<svg class="a" style="left:125px;top:1055px" width="19" height="15" viewBox="0 0 19 15" ><path d="M1 14 V1 H7 L8.5 3 H18 V14 Z" fill="none" stroke="#555" stroke-width="1.3" stroke-linejoin="round"/></svg>
<div class="t" style="left:150px;top:1054.9px;font-size:14.5px;line-height:17.4px;color:#666;-webkit-text-stroke:0.22px #666;transform:scaleX(0.931);">Exercise 3</div>
<div class="a" style="left:237px;top:1050px;width:200px;height:29px;background:#dedede"></div>
<svg class="a" style="left:249px;top:1056px" width="13" height="13" viewBox="0 0 13 13" ><circle cx="6.5" cy="6.5" r="6.5" fill="#5b8fd8"/><path d="M6.5 2.5 V8 M4 6 L6.5 8.5 L9 6" stroke="#fff" stroke-width="1.6" fill="none"/><circle cx="6.5" cy="10.5" r="0.9" fill="#fff"/></svg>
<svg class="a" style="left:266px;top:1054px" width="19" height="19" viewBox="0 0 19 19" ><rect x="1" y="1" width="13" height="13" rx="2" fill="#fff" stroke="#444" stroke-width="1.1"/><path d="M4.5 4.5 H17.5 V17.5 H4.5 Z" fill="#777" stroke="#333" stroke-width="1.1"/><path d="M4.5 4.5 L8 8 H17.5 M8 8 V17.5" stroke="#333" stroke-width="0.9" fill="none"/></svg>
<div class="t" style="left:289px;top:1055.3px;font-size:14.5px;line-height:17.4px;color:#6e6e6e;-webkit-text-stroke:0.22px #6e6e6e;transform:scaleX(0.957);">Exercise 3 Assembly</div>
<div class="a" style="left:438px;top:1050px;width:199px;height:29px;background:#efefef"></div>
<div class="a" style="left:438px;top:1076px;width:199px;height:2px;background:#1b5faa"></div>
<svg class="a" style="left:449px;top:1054px" width="19" height="19" viewBox="0 0 19 19" ><g fill="#fff" stroke="#333" stroke-width="1.2" stroke-linejoin="round"><path d="M2 6 L5 4.5 H8 V16 L5 17.5 H2 Z"/><path d="M8 4 L11 2 H15.5 V15.5 L12.5 17.5 H8 Z"/><path d="M12.5 4.5 V17.5" fill="none"/></g></svg>
<div class="t" style="left:471px;top:1055.3px;font-size:14.5px;line-height:17.4px;color:#222;-webkit-text-stroke:0.22px #222;transform:scaleX(0.941);">Exercise 3 Part Studio</div>
</body></html>
